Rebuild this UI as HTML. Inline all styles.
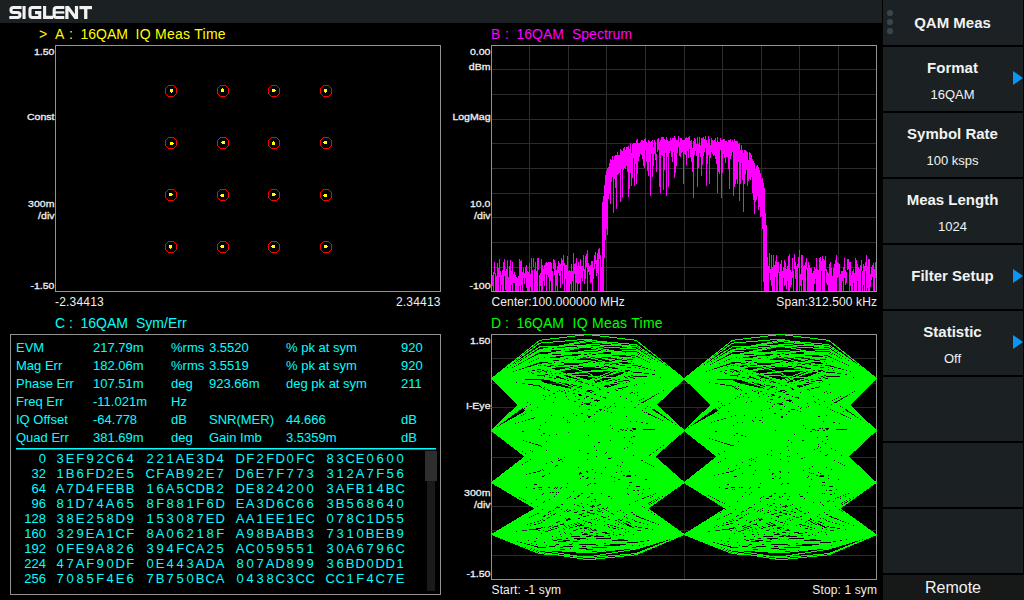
<!DOCTYPE html>
<html><head><meta charset="utf-8"><style>
html,body{margin:0;padding:0;background:#000;width:1024px;height:600px;overflow:hidden}
svg{display:block}
text{font-family:"Liberation Sans", sans-serif}
</style></head><body>
<svg width="1024" height="600" viewBox="0 0 1024 600">
<rect x="0" y="0" width="1024" height="600" fill="#000"/>
<rect x="0" y="0" width="882" height="23" fill="#1b2122"/>
<g fill="none" stroke="#f2f2f2" stroke-width="3.1"><path d="M21.6 7.55H13.4Q10.95 7.55 10.95 10.05Q10.95 12.5 13.4 12.5H17.4Q19.95 12.5 19.95 15Q19.95 17.45 17.4 17.45H9.3"/><path d="M41.3 7.55H32.4Q29.95 7.55 29.95 10V15Q29.95 17.45 32.4 17.45H39.75V12.6H35" stroke-linejoin="miter"/><path d="M44.6 6V17.4H53.2"/><path d="M64.3 7.55H56.6Q54.15 7.55 54.15 10V15Q54.15 17.45 56.6 17.45H64.3"/><path d="M55 12.45H64.3" stroke-width="2.3"/></g><g fill="#f2f2f2"><rect x="22.5" y="6" width="3.1" height="13"/><polygon points="65.3,19 65.3,6 68.9,6 74.9,14.2 74.9,6 78.1,6 78.1,19 74.5,19 68.5,10.8 68.5,19"/><rect x="79.4" y="6" width="12.6" height="3.2"/><rect x="84.1" y="6" width="3.3" height="13"/></g>
<rect x="883" y="0" width="140" height="45" fill="#1b2124"/>
<rect x="883" y="47" width="140" height="64" fill="#1b2122"/>
<rect x="883" y="113" width="140" height="64" fill="#1b2122"/>
<rect x="883" y="179" width="140" height="64" fill="#1b2122"/>
<rect x="883" y="245" width="140" height="64" fill="#1b2122"/>
<rect x="883" y="311" width="140" height="64" fill="#1b2122"/>
<rect x="883" y="377" width="140" height="64" fill="#1b2122"/>
<rect x="883" y="443" width="140" height="64" fill="#1b2122"/>
<rect x="883" y="509" width="140" height="64" fill="#1b2122"/>
<rect x="883" y="575" width="141" height="25" fill="#171818"/>
<circle cx="890" cy="13" r="3.1" fill="#3a454b"/>
<circle cx="890" cy="22" r="3.1" fill="#3a454b"/>
<circle cx="890" cy="31" r="3.1" fill="#3a454b"/>
<text x="952.5" y="27.8" font-size="15" fill="#f2f2f2" text-anchor="middle" font-weight="bold" >QAM Meas</text>
<text x="952.5" y="73" font-size="15" fill="#f2f2f2" text-anchor="middle" font-weight="bold" >Format</text>
<text x="952.5" y="99" font-size="13" fill="#f2f2f2" text-anchor="middle" font-weight="normal" >16QAM</text>
<polygon points="1013,71 1023,78 1013,85" fill="#0a96f5"/>
<text x="952.5" y="139" font-size="15" fill="#f2f2f2" text-anchor="middle" font-weight="bold" >Symbol Rate</text>
<text x="952.5" y="165" font-size="13" fill="#f2f2f2" text-anchor="middle" font-weight="normal" >100 ksps</text>
<text x="952.5" y="205" font-size="15" fill="#f2f2f2" text-anchor="middle" font-weight="bold" >Meas Length</text>
<text x="952.5" y="231" font-size="13" fill="#f2f2f2" text-anchor="middle" font-weight="normal" >1024</text>
<text x="952.5" y="281.3" font-size="15" fill="#f2f2f2" text-anchor="middle" font-weight="bold" >Filter Setup</text>
<polygon points="1013,269 1023,276 1013,283" fill="#0a96f5"/>
<text x="952.5" y="337" font-size="15" fill="#f2f2f2" text-anchor="middle" font-weight="bold" >Statistic</text>
<text x="952.5" y="363" font-size="13" fill="#f2f2f2" text-anchor="middle" font-weight="normal" >Off</text>
<polygon points="1013,335 1023,342 1013,349" fill="#0a96f5"/>
<text x="953" y="593" font-size="16" fill="#f2f2f2" text-anchor="middle" font-weight="normal" >Remote</text>
<rect x="55" y="45" width="386" height="1" fill="#939393"/>
<rect x="55" y="291" width="386" height="1" fill="#939393"/>
<rect x="55" y="45" width="1" height="247" fill="#939393"/>
<rect x="440" y="45" width="1" height="247" fill="#939393"/>
<rect x="529" y="45" width="1" height="246" fill="#2c2c2c"/>
<rect x="568" y="45" width="1" height="246" fill="#2c2c2c"/>
<rect x="606" y="45" width="1" height="246" fill="#2c2c2c"/>
<rect x="645" y="45" width="1" height="246" fill="#2c2c2c"/>
<rect x="684" y="45" width="1" height="246" fill="#2c2c2c"/>
<rect x="722" y="45" width="1" height="246" fill="#2c2c2c"/>
<rect x="761" y="45" width="1" height="246" fill="#2c2c2c"/>
<rect x="799" y="45" width="1" height="246" fill="#2c2c2c"/>
<rect x="838" y="45" width="1" height="246" fill="#2c2c2c"/>
<rect x="491" y="69" width="385" height="1" fill="#2c2c2c"/>
<rect x="491" y="94" width="385" height="1" fill="#2c2c2c"/>
<rect x="491" y="119" width="385" height="1" fill="#2c2c2c"/>
<rect x="491" y="143" width="385" height="1" fill="#2c2c2c"/>
<rect x="491" y="168" width="385" height="1" fill="#2c2c2c"/>
<rect x="491" y="193" width="385" height="1" fill="#2c2c2c"/>
<rect x="491" y="217" width="385" height="1" fill="#2c2c2c"/>
<rect x="491" y="242" width="385" height="1" fill="#2c2c2c"/>
<rect x="491" y="267" width="385" height="1" fill="#2c2c2c"/>
<rect x="491" y="45" width="386" height="1" fill="#939393"/>
<rect x="491" y="291" width="386" height="1" fill="#939393"/>
<rect x="491" y="45" width="1" height="247" fill="#939393"/>
<rect x="876" y="45" width="1" height="247" fill="#939393"/>
<rect x="684" y="334" width="1" height="245" fill="#2c2c2c"/>
<rect x="491" y="358" width="385" height="1" fill="#2c2c2c"/>
<rect x="491" y="383" width="385" height="1" fill="#2c2c2c"/>
<rect x="491" y="407" width="385" height="1" fill="#2c2c2c"/>
<rect x="491" y="432" width="385" height="1" fill="#2c2c2c"/>
<rect x="491" y="457" width="385" height="1" fill="#2c2c2c"/>
<rect x="491" y="481" width="385" height="1" fill="#2c2c2c"/>
<rect x="491" y="506" width="385" height="1" fill="#2c2c2c"/>
<rect x="491" y="530" width="385" height="1" fill="#2c2c2c"/>
<rect x="491" y="555" width="385" height="1" fill="#2c2c2c"/>
<rect x="491" y="334" width="386" height="1" fill="#939393"/>
<rect x="491" y="579" width="386" height="1" fill="#939393"/>
<rect x="491" y="334" width="1" height="246" fill="#939393"/>
<rect x="876" y="334" width="1" height="246" fill="#939393"/>
<rect x="10" y="334" width="431" height="1" fill="#939393"/>
<rect x="10" y="594" width="431" height="1" fill="#939393"/>
<rect x="10" y="334" width="1" height="261" fill="#939393"/>
<rect x="440" y="334" width="1" height="261" fill="#939393"/>
<path d="M492 275h1V286h-1zM493 272h1V291h-1zM494 262h1V274h-1zM495 273h1V291h-1zM496 276h1V291h-1zM497 263h1V291h-1zM498 268h1V291h-1zM499 259h1V277h-1zM500 271h1V291h-1zM501 275h1V285h-1zM502 270h1V291h-1zM503 262h1V291h-1zM504 259h1V276h-1zM505 271h1V290h-1zM506 269h1V291h-1zM507 260h1V291h-1zM508 277h1V291h-1zM509 266h1V291h-1zM510 260h1V291h-1zM511 271h1V285h-1zM512 262h1V291h-1zM513 274h1V283h-1zM514 272h1V283h-1zM515 275h1V291h-1zM516 277h1V291h-1zM517 278h1V291h-1zM518 276h1V291h-1zM519 259h1V286h-1zM520 261h1V291h-1zM521 260h1V285h-1zM522 272h1V291h-1zM523 268h1V278h-1zM524 273h1V284h-1zM525 267h1V278h-1zM526 265h1V288h-1zM527 271h1V291h-1zM528 272h1V291h-1zM529 263h1V291h-1zM530 274h1V287h-1zM531 258h1V291h-1zM532 270h1V291h-1zM533 258h1V267h-1zM534 269h1V291h-1zM535 262h1V291h-1zM536 271h1V291h-1zM537 258h1V291h-1zM538 258h1V270h-1zM539 275h1V291h-1zM540 273h1V286h-1zM541 259h1V291h-1zM542 265h1V291h-1zM543 269h1V281h-1zM544 265h1V286h-1zM545 263h1V274h-1zM546 262h1V291h-1zM547 263h1V275h-1zM548 262h1V277h-1zM549 262h1V291h-1zM550 262h1V281h-1zM551 263h1V291h-1zM552 271h1V291h-1zM553 259h1V269h-1zM554 260h1V275h-1zM555 263h1V291h-1zM556 270h1V286h-1zM557 266h1V291h-1zM558 261h1V273h-1zM559 263h1V276h-1zM560 264h1V288h-1zM561 258h1V271h-1zM562 260h1V284h-1zM563 255h1V266h-1zM564 263h1V291h-1zM565 265h1V279h-1zM566 265h1V291h-1zM567 256h1V291h-1zM568 271h1V291h-1zM569 270h1V291h-1zM570 271h1V284h-1zM571 264h1V291h-1zM572 271h1V281h-1zM573 253h1V291h-1zM574 264h1V274h-1zM575 263h1V291h-1zM576 258h1V283h-1zM577 266h1V291h-1zM578 262h1V284h-1zM579 266h1V283h-1zM580 259h1V291h-1zM581 266h1V278h-1zM582 266h1V281h-1zM583 255h1V271h-1zM584 269h1V284h-1zM585 256h1V279h-1zM586 254h1V267h-1zM587 250h1V291h-1zM588 263h1V272h-1zM589 266h1V275h-1zM590 265h1V283h-1zM591 261h1V282h-1zM592 261h1V291h-1zM593 268h1V279h-1zM594 255h1V269h-1zM595 252h1V264h-1zM596 260h1V276h-1zM597 253h1V273h-1zM598 249h1V291h-1zM599 248h1V259h-1zM600 255h1V291h-1zM601 267h1V291h-1zM602 202h1V291h-1zM603 196h1V291h-1zM604 185h1V258h-1zM605 175h1V240h-1zM606 171h1V229h-1zM607 168h1V235h-1zM608 167h1V199h-1zM609 163h1V194h-1zM610 159h1V204h-1zM611 160h1V182h-1zM612 156h1V177h-1zM613 160h1V213h-1zM614 156h1V179h-1zM615 155h1V188h-1zM616 155h1V209h-1zM617 152h1V175h-1zM618 155h1V174h-1zM619 155h1V173h-1zM620 149h1V202h-1zM621 150h1V169h-1zM622 151h1V197h-1zM623 148h1V170h-1zM624 147h1V168h-1zM625 150h1V169h-1zM626 147h1V166h-1zM627 147h1V172h-1zM628 146h1V197h-1zM629 149h1V189h-1zM630 143h1V173h-1zM631 153h1V186h-1zM632 144h1V178h-1zM633 143h1V158h-1zM634 143h1V186h-1zM635 143h1V164h-1zM636 140h1V184h-1zM637 139h1V174h-1zM638 143h1V161h-1zM639 143h1V157h-1zM640 142h1V154h-1zM641 140h1V155h-1zM642 140h1V159h-1zM643 141h1V166h-1zM644 139h1V168h-1zM645 138h1V150h-1zM646 142h1V162h-1zM647 143h1V171h-1zM648 140h1V176h-1zM649 141h1V162h-1zM650 142h1V196h-1zM651 141h1V154h-1zM652 140h1V177h-1zM653 147h1V166h-1zM654 140h1V154h-1zM655 142h1V160h-1zM656 154h1V172h-1zM657 139h1V152h-1zM658 138h1V150h-1zM659 142h1V187h-1zM660 140h1V193h-1zM661 137h1V155h-1zM662 137h1V156h-1zM663 137h1V190h-1zM664 139h1V170h-1zM665 140h1V153h-1zM666 137h1V196h-1zM667 140h1V157h-1zM668 141h1V187h-1zM669 141h1V153h-1zM670 138h1V151h-1zM671 140h1V157h-1zM672 138h1V162h-1zM673 138h1V152h-1zM674 136h1V178h-1zM675 138h1V173h-1zM676 140h1V166h-1zM677 140h1V153h-1zM678 136h1V147h-1zM679 142h1V156h-1zM680 138h1V157h-1zM681 138h1V153h-1zM682 140h1V152h-1zM683 140h1V184h-1zM684 140h1V154h-1zM685 138h1V155h-1zM686 137h1V165h-1zM687 138h1V151h-1zM688 137h1V158h-1zM689 136h1V149h-1zM690 141h1V157h-1zM691 140h1V162h-1zM692 148h1V172h-1zM693 141h1V198h-1zM694 138h1V155h-1zM695 139h1V151h-1zM696 144h1V156h-1zM697 137h1V187h-1zM698 144h1V168h-1zM699 137h1V153h-1zM700 145h1V157h-1zM701 138h1V176h-1zM702 138h1V165h-1zM703 137h1V156h-1zM704 139h1V152h-1zM705 136h1V148h-1zM706 140h1V186h-1zM707 143h1V164h-1zM708 136h1V155h-1zM709 139h1V184h-1zM710 145h1V158h-1zM711 138h1V152h-1zM712 140h1V154h-1zM713 141h1V156h-1zM714 140h1V155h-1zM715 138h1V159h-1zM716 142h1V164h-1zM717 137h1V193h-1zM718 142h1V172h-1zM719 142h1V174h-1zM720 138h1V150h-1zM721 140h1V198h-1zM722 140h1V173h-1zM723 139h1V154h-1zM724 139h1V158h-1zM725 141h1V163h-1zM726 141h1V157h-1zM727 142h1V157h-1zM728 140h1V169h-1zM729 140h1V189h-1zM730 139h1V159h-1zM731 142h1V156h-1zM732 140h1V152h-1zM733 142h1V196h-1zM734 139h1V187h-1zM735 141h1V184h-1zM736 141h1V179h-1zM737 141h1V184h-1zM738 144h1V162h-1zM739 143h1V201h-1zM740 150h1V184h-1zM741 145h1V163h-1zM742 150h1V180h-1zM743 153h1V212h-1zM744 150h1V184h-1zM745 150h1V175h-1zM746 151h1V170h-1zM747 152h1V186h-1zM748 160h1V181h-1zM749 152h1V179h-1zM750 153h1V180h-1zM751 155h1V177h-1zM752 159h1V193h-1zM753 161h1V200h-1zM754 163h1V214h-1zM755 169h1V202h-1zM756 166h1V200h-1zM757 165h1V196h-1zM758 167h1V210h-1zM759 170h1V207h-1zM760 173h1V217h-1zM761 179h1V216h-1zM762 178h1V229h-1zM763 183h1V282h-1zM764 188h1V291h-1zM765 213h1V291h-1zM766 225h1V291h-1zM767 257h1V291h-1zM768 266h1V291h-1zM769 253h1V273h-1zM770 269h1V280h-1zM771 255h1V286h-1zM772 267h1V291h-1zM773 255h1V291h-1zM774 265h1V291h-1zM775 261h1V277h-1zM776 255h1V291h-1zM777 262h1V291h-1zM778 262h1V273h-1zM779 272h1V291h-1zM780 264h1V291h-1zM781 260h1V291h-1zM782 271h1V291h-1zM783 267h1V278h-1zM784 260h1V286h-1zM785 262h1V285h-1zM786 269h1V289h-1zM787 266h1V281h-1zM788 256h1V291h-1zM789 254h1V291h-1zM790 270h1V287h-1zM791 272h1V285h-1zM792 258h1V278h-1zM793 271h1V291h-1zM794 254h1V269h-1zM795 262h1V279h-1zM796 266h1V291h-1zM797 264h1V291h-1zM798 257h1V268h-1zM799 250h1V291h-1zM800 274h1V286h-1zM801 255h1V291h-1zM802 255h1V280h-1zM803 266h1V291h-1zM804 265h1V291h-1zM805 262h1V291h-1zM806 258h1V269h-1zM807 268h1V291h-1zM808 262h1V291h-1zM809 265h1V291h-1zM810 268h1V291h-1zM811 268h1V291h-1zM812 273h1V291h-1zM813 271h1V291h-1zM814 267h1V284h-1zM815 269h1V279h-1zM816 258h1V291h-1zM817 269h1V291h-1zM818 270h1V291h-1zM819 258h1V291h-1zM820 257h1V291h-1zM821 261h1V271h-1zM822 256h1V291h-1zM823 259h1V291h-1zM824 260h1V291h-1zM825 256h1V271h-1zM826 269h1V283h-1zM827 272h1V285h-1zM828 273h1V291h-1zM829 264h1V291h-1zM830 262h1V291h-1zM831 268h1V291h-1zM832 276h1V291h-1zM833 268h1V291h-1zM834 264h1V291h-1zM835 260h1V291h-1zM836 255h1V291h-1zM837 262h1V278h-1zM838 263h1V277h-1zM839 264h1V291h-1zM840 274h1V291h-1zM841 271h1V291h-1zM842 271h1V281h-1zM843 267h1V291h-1zM844 258h1V278h-1zM845 270h1V285h-1zM846 272h1V283h-1zM847 259h1V270h-1zM848 259h1V269h-1zM849 262h1V291h-1zM850 262h1V286h-1zM851 275h1V291h-1zM852 271h1V291h-1zM853 269h1V283h-1zM854 273h1V291h-1zM855 258h1V291h-1zM856 260h1V291h-1zM857 264h1V281h-1zM858 267h1V291h-1zM859 269h1V291h-1zM860 265h1V291h-1zM861 260h1V271h-1zM862 271h1V291h-1zM863 264h1V285h-1zM864 266h1V291h-1zM865 262h1V271h-1zM866 255h1V291h-1zM867 266h1V288h-1zM868 259h1V291h-1zM869 259h1V291h-1zM870 274h1V287h-1zM871 267h1V280h-1zM872 265h1V277h-1zM873 263h1V291h-1zM874 269h1V291h-1zM875 262h1V278h-1z" fill="#ff00ff" shape-rendering="crispEdges"/>
<svg x="491" y="334" width="386" height="246" overflow="hidden"><g transform="translate(-491,-334)" shape-rendering="crispEdges"><path d="M491.5 378.7L539.7 350.8L587.9 347.3L636.0 357.0L684.2 378.7L732.4 393.8L780.5 408.0L828.7 420.4L876.9 430.6M491.5 378.7L539.7 393.8L587.9 408.0L636.0 420.4L684.2 430.6L732.4 438.8L780.5 443.7L828.7 442.2L876.9 430.6M491.5 430.6L539.7 438.8L587.9 443.7L636.0 442.2L684.2 430.6L732.4 408.9L780.5 384.0L828.7 363.2L876.9 378.7M491.5 430.6L539.7 408.9L587.9 384.0L636.0 363.2L684.2 378.7L732.4 415.2L780.5 467.9L828.7 514.7L876.9 534.5M491.5 378.7L539.7 415.2L587.9 467.9L636.0 514.7L684.2 534.5L732.4 519.0L780.5 476.2L828.7 423.7L876.9 378.7M491.5 534.5L539.7 519.0L587.9 476.2L636.0 423.7L684.2 378.7L732.4 340.3L780.5 334.5L828.7 340.3L876.9 378.7M491.5 378.7L539.7 340.3L587.9 334.5L636.0 340.3L684.2 378.7L732.4 423.3L780.5 475.0L828.7 517.5L876.9 534.5M491.5 378.7L539.7 423.3L587.9 475.0L636.0 517.5L684.2 534.5L732.4 518.4L780.5 475.5L828.7 422.9L876.9 378.7M491.5 534.5L539.7 518.4L587.9 475.5L636.0 422.9L684.2 378.7L732.4 343.1L780.5 339.1L828.7 348.9L876.9 378.7M491.5 378.7L539.7 343.1L587.9 339.1L636.0 348.9L684.2 378.7L732.4 403.3L780.5 430.7L828.7 458.4L876.9 482.6M491.5 378.7L539.7 403.3L587.9 430.7L636.0 458.4L684.2 482.6L732.4 499.2L780.5 505.1L828.7 499.1L876.9 482.6M491.5 482.6L539.7 499.2L587.9 505.1L636.0 499.1L684.2 482.6L732.4 458.5L780.5 430.8L828.7 403.2L876.9 378.7M491.5 482.6L539.7 458.5L587.9 430.8L636.0 403.2L684.2 378.7L732.4 349.7L780.5 340.3L828.7 344.6L876.9 378.7M491.5 378.7L539.7 349.7L587.9 340.3L636.0 344.6L684.2 378.7L732.4 420.3L780.5 470.8L828.7 514.2L876.9 534.5M491.5 378.7L539.7 420.3L587.9 470.8L636.0 514.2L684.2 534.5L732.4 525.0L780.5 492.9L828.7 455.5L876.9 430.6M491.5 534.5L539.7 525.0L587.9 492.9L636.0 455.5L684.2 430.6L732.4 426.7L780.5 440.6L828.7 462.4L876.9 482.6M491.5 430.6L539.7 426.7L587.9 440.6L636.0 462.4L684.2 482.6L732.4 496.0L780.5 501.3L828.7 497.2L876.9 482.6M491.5 482.6L539.7 496.0L587.9 501.3L636.0 497.2L684.2 482.6L732.4 457.4L780.5 426.1L828.7 397.0L876.9 378.7M491.5 482.6L539.7 457.4L587.9 426.1L636.0 397.0L684.2 378.7L732.4 373.5L780.5 386.7L828.7 406.7L876.9 430.6M491.5 378.7L539.7 373.5L587.9 386.7L636.0 406.7L684.2 430.6L732.4 454.5L780.5 474.7L828.7 485.9L876.9 482.6M491.5 430.6L539.7 454.5L587.9 474.7L636.0 485.9L684.2 482.6L732.4 462.3L780.5 429.9L828.7 397.4L876.9 378.7M491.5 482.6L539.7 462.3L587.9 429.9L636.0 397.4L684.2 378.7L732.4 381.2L780.5 400.7L828.7 422.5L876.9 430.6M491.5 378.7L539.7 381.2L587.9 400.7L636.0 422.5L684.2 430.6L732.4 418.2L780.5 393.0L828.7 370.2L876.9 378.7M491.5 430.6L539.7 418.2L587.9 393.0L636.0 370.2L684.2 378.7L732.4 413.6L780.5 466.6L828.7 514.3L876.9 534.5M491.5 378.7L539.7 413.6L587.9 466.6L636.0 514.3L684.2 534.5L732.4 518.2L780.5 473.8L828.7 420.9L876.9 378.7M491.5 534.5L539.7 518.2L587.9 473.8L636.0 420.9L684.2 378.7L732.4 346.9L780.5 345.2L828.7 357.3L876.9 378.7M491.5 378.7L539.7 346.9L587.9 345.2L636.0 357.3L684.2 378.7L732.4 390.9L780.5 402.5L828.7 415.3L876.9 430.6M491.5 378.7L539.7 390.9L587.9 402.5L636.0 415.3L684.2 430.6L732.4 447.6L780.5 463.8L828.7 476.2L876.9 482.6M491.5 430.6L539.7 447.6L587.9 463.8L636.0 476.2L684.2 482.6L732.4 482.8L780.5 479.6L828.7 478.0L876.9 482.6M491.5 482.6L539.7 482.8L587.9 479.6L636.0 478.0L684.2 482.6L732.4 494.5L780.5 510.8L828.7 525.9L876.9 534.5M491.5 482.6L539.7 494.5L587.9 510.8L636.0 525.9L684.2 534.5L732.4 534.5L780.5 525.8L828.7 508.6L876.9 482.6M491.5 534.5L539.7 534.5L587.9 525.8L636.0 508.6L684.2 482.6L732.4 448.7L780.5 412.6L828.7 385.4L876.9 378.7M491.5 482.6L539.7 448.7L587.9 412.6L636.0 385.4L684.2 378.7L732.4 397.3L780.5 433.2L828.7 468.1L876.9 482.6M491.5 378.7L539.7 397.3L587.9 433.2L636.0 468.1L684.2 482.6L732.4 467.9L780.5 432.0L828.7 395.4L876.9 378.7M491.5 482.6L539.7 467.9L587.9 432.0L636.0 395.4L684.2 378.7L732.4 390.8L780.5 424.5L828.7 461.1L876.9 482.6M491.5 378.7L539.7 390.8L587.9 424.5L636.0 461.1L684.2 482.6L732.4 481.2L780.5 462.7L828.7 441.2L876.9 430.6M491.5 482.6L539.7 481.2L587.9 462.7L636.0 441.2L684.2 430.6L732.4 437.0L780.5 455.6L828.7 474.7L876.9 482.6M491.5 430.6L539.7 437.0L587.9 455.6L636.0 474.7L684.2 482.6L732.4 474.4L780.5 455.1L828.7 436.6L876.9 430.6M491.5 482.6L539.7 474.4L587.9 455.1L636.0 436.6L684.2 430.6L732.4 441.5L780.5 462.8L828.7 480.7L876.9 482.6M491.5 430.6L539.7 441.5L587.9 462.8L636.0 480.7L684.2 482.6L732.4 464.4L780.5 432.9L828.7 400.6L876.9 378.7M491.5 482.6L539.7 464.4L587.9 432.9L636.0 400.6L684.2 378.7L732.4 367.5L780.5 380.2L828.7 400.4L876.9 430.6M491.5 378.7L539.7 367.5L587.9 380.2L636.0 400.4L684.2 430.6L732.4 468.3L780.5 506.3L828.7 532.5L876.9 534.5M491.5 430.6L539.7 468.3L587.9 506.3L636.0 532.5L684.2 534.5L732.4 507.8L780.5 460.6L828.7 411.4L876.9 378.7M491.5 534.5L539.7 507.8L587.9 460.6L636.0 411.4L684.2 378.7L732.4 366.5L780.5 385.9L828.7 409.6L876.9 430.6M491.5 378.7L539.7 366.5L587.9 385.9L636.0 409.6L684.2 430.6L732.4 443.1L780.5 446.4L828.7 442.0L876.9 430.6M491.5 430.6L539.7 443.1L587.9 446.4L636.0 442.0L684.2 430.6L732.4 413.5L780.5 394.4L828.7 380.5L876.9 378.7M491.5 430.6L539.7 413.5L587.9 394.4L636.0 380.5L684.2 378.7L732.4 392.1L780.5 417.9L828.7 450.1L876.9 482.6M491.5 378.7L539.7 392.1L587.9 417.9L636.0 450.1L684.2 482.6L732.4 511.3L780.5 532.7L828.7 540.5L876.9 534.5M491.5 482.6L539.7 511.3L587.9 532.7L636.0 540.5L684.2 534.5L732.4 509.9L780.5 475.3L828.7 444.3L876.9 430.6M491.5 534.5L539.7 509.9L587.9 475.3L636.0 444.3L684.2 430.6L732.4 440.3L780.5 468.8L828.7 504.2L876.9 534.5M491.5 430.6L539.7 440.3L587.9 468.8L636.0 504.2L684.2 534.5L732.4 549.1L780.5 553.0L828.7 547.7L876.9 534.5M491.5 534.5L539.7 549.1L587.9 553.0L636.0 547.7L684.2 534.5L732.4 509.9L780.5 480.6L828.7 452.1L876.9 430.6M491.5 534.5L539.7 509.9L587.9 480.6L636.0 452.1L684.2 430.6L732.4 419.6L780.5 418.5L828.7 423.6L876.9 430.6M491.5 430.6L539.7 419.6L587.9 418.5L636.0 423.6L684.2 430.6L732.4 436.7L780.5 439.7L828.7 438.2L876.9 430.6M491.5 430.6L539.7 436.7L587.9 439.7L636.0 438.2L684.2 430.6L732.4 417.4L780.5 401.4L828.7 387.1L876.9 378.7M491.5 430.6L539.7 417.4L587.9 401.4L636.0 387.1L684.2 378.7L732.4 378.2L780.5 386.7L828.7 404.0L876.9 430.6M491.5 378.7L539.7 378.2L587.9 386.7L636.0 404.0L684.2 430.6L732.4 465.1L780.5 501.1L828.7 528.0L876.9 534.5M491.5 430.6L539.7 465.1L587.9 501.1L636.0 528.0L684.2 534.5L732.4 516.8L780.5 482.2L828.7 447.7L876.9 430.6M491.5 534.5L539.7 516.8L587.9 482.2L636.0 447.7L684.2 430.6L732.4 439.6L780.5 469.7L828.7 506.5L876.9 534.5M491.5 430.6L539.7 439.6L587.9 469.7L636.0 506.5L684.2 534.5L732.4 543.9L780.5 542.3L828.7 537.0L876.9 534.5M491.5 534.5L539.7 543.9L587.9 542.3L636.0 537.0L684.2 534.5L732.4 536.8L780.5 540.9L828.7 541.5L876.9 534.5M491.5 534.5L539.7 536.8L587.9 540.9L636.0 541.5L684.2 534.5L732.4 515.6L780.5 489.3L828.7 459.8L876.9 430.6M491.5 534.5L539.7 515.6L587.9 489.3L636.0 459.8L684.2 430.6L732.4 404.8L780.5 385.2L828.7 373.1L876.9 378.7M491.5 430.6L539.7 404.8L587.9 385.2L636.0 373.1L684.2 378.7L732.4 395.5L780.5 422.7L828.7 454.0L876.9 482.6M491.5 378.7L539.7 395.5L587.9 422.7L636.0 454.0L684.2 482.6L732.4 504.5L780.5 519.4L828.7 528.9L876.9 534.5M491.5 482.6L539.7 504.5L587.9 519.4L636.0 528.9L684.2 534.5L732.4 536.1L780.5 535.0L828.7 533.1L876.9 534.5M491.5 534.5L539.7 536.1L587.9 535.0L636.0 533.1L684.2 534.5L732.4 540.4L780.5 548.0L828.7 549.1L876.9 534.5M491.5 534.5L539.7 540.4L587.9 548.0L636.0 549.1L684.2 534.5L732.4 493.1L780.5 438.9L828.7 393.7L876.9 378.7M491.5 534.5L539.7 493.1L587.9 438.9L636.0 393.7L684.2 378.7L732.4 401.8L780.5 451.8L828.7 504.1L876.9 534.5M491.5 378.7L539.7 401.8L587.9 451.8L636.0 504.1L684.2 534.5L732.4 531.9L780.5 502.4L828.7 463.0L876.9 430.6M491.5 534.5L539.7 531.9L587.9 502.4L636.0 463.0L684.2 430.6L732.4 414.0L780.5 412.2L828.7 419.6L876.9 430.6M491.5 430.6L539.7 414.0L587.9 412.2L636.0 419.6L684.2 430.6L732.4 443.0L780.5 456.4L828.7 470.3L876.9 482.6M491.5 430.6L539.7 443.0L587.9 456.4L636.0 470.3L684.2 482.6L732.4 490.7L780.5 492.9L828.7 489.7L876.9 482.6M491.5 482.6L539.7 490.7L587.9 492.9L636.0 489.7L684.2 482.6L732.4 473.4L780.5 462.4L828.7 448.6L876.9 430.6M491.5 482.6L539.7 473.4L587.9 462.4L636.0 448.6L684.2 430.6L732.4 409.2L780.5 388.4L828.7 373.6L876.9 378.7M491.5 430.6L539.7 409.2L587.9 388.4L636.0 373.6L684.2 378.7L732.4 399.9L780.5 433.3L828.7 465.8L876.9 482.6M491.5 378.7L539.7 399.9L587.9 433.3L636.0 465.8L684.2 482.6L732.4 476.9L780.5 455.0L828.7 433.6L876.9 430.6M491.5 482.6L539.7 476.9L587.9 455.0L636.0 433.6L684.2 430.6L732.4 453.0L780.5 491.8L828.7 525.8L876.9 534.5M491.5 430.6L539.7 453.0L587.9 491.8L636.0 525.8L684.2 534.5L732.4 510.2L780.5 462.2L828.7 411.6L876.9 378.7M491.5 534.5L539.7 510.2L587.9 462.2L636.0 411.6L684.2 378.7L732.4 368.1L780.5 387.9L828.7 411.5L876.9 430.6M491.5 378.7L539.7 368.1L587.9 387.9L636.0 411.5L684.2 430.6L732.4 439.5L780.5 439.7L828.7 435.5L876.9 430.6M491.5 430.6L539.7 439.5L587.9 439.7L636.0 435.5L684.2 430.6L732.4 426.3L780.5 423.5L828.7 424.2L876.9 430.6M491.5 430.6L539.7 426.3L587.9 423.5L636.0 424.2L684.2 430.6L732.4 443.6L780.5 460.2L828.7 475.0L876.9 482.6M491.5 430.6L539.7 443.6L587.9 460.2L636.0 475.0L684.2 482.6L732.4 480.2L780.5 468.6L828.7 450.9L876.9 430.6M491.5 482.6L539.7 480.2L587.9 468.6L636.0 450.9L684.2 430.6L732.4 410.9L780.5 394.2L828.7 382.9L876.9 378.7M491.5 430.6L539.7 410.9L587.9 394.2L636.0 382.9L684.2 378.7L732.4 382.3L780.5 393.0L828.7 409.7L876.9 430.6M491.5 378.7L539.7 382.3L587.9 393.0L636.0 409.7L684.2 430.6L732.4 453.3L780.5 473.4L828.7 484.9L876.9 482.6M491.5 430.6L539.7 453.3L587.9 473.4L636.0 484.9L684.2 482.6L732.4 464.6L780.5 435.2L828.7 403.3L876.9 378.7M491.5 482.6L539.7 464.6L587.9 435.2L636.0 403.3L684.2 378.7L732.4 359.6L780.5 360.4L828.7 370.6L876.9 378.7M491.5 378.7L539.7 359.6L587.9 360.4L636.0 370.6L684.2 378.7L732.4 377.8L780.5 371.2L828.7 368.6L876.9 378.7M491.5 378.7L539.7 377.8L587.9 371.2L636.0 368.6L684.2 378.7L732.4 392.9L780.5 410.9L828.7 425.4L876.9 430.6M491.5 378.7L539.7 392.9L587.9 410.9L636.0 425.4L684.2 430.6L732.4 424.8L780.5 411.1L828.7 394.3L876.9 378.7M491.5 430.6L539.7 424.8L587.9 411.1L636.0 394.3L684.2 378.7L732.4 358.9L780.5 350.3L828.7 353.8L876.9 378.7M491.5 378.7L539.7 358.9L587.9 350.3L636.0 353.8L684.2 378.7L732.4 407.7L780.5 443.7L828.7 473.4L876.9 482.6M491.5 378.7L539.7 407.7L587.9 443.7L636.0 473.4L684.2 482.6L732.4 465.2L780.5 429.2L828.7 393.6L876.9 378.7M491.5 482.6L539.7 465.2L587.9 429.2L636.0 393.6L684.2 378.7L732.4 393.4L780.5 429.4L828.7 466.1L876.9 482.6M491.5 378.7L539.7 393.4L587.9 429.4L636.0 466.1L684.2 482.6L732.4 470.4L780.5 437.2L828.7 401.0L876.9 378.7M491.5 482.6L539.7 470.4L587.9 437.2L636.0 401.0L684.2 378.7L732.4 376.6L780.5 392.8L828.7 413.9L876.9 430.6M491.5 378.7L539.7 376.6L587.9 392.8L636.0 413.9L684.2 430.6L732.4 438.6L780.5 438.9L828.7 435.1L876.9 430.6M491.5 430.6L539.7 438.6L587.9 438.9L636.0 435.1L684.2 430.6L732.4 427.2L780.5 425.6L828.7 426.6L876.9 430.6M491.5 430.6L539.7 427.2L587.9 425.6L636.0 426.6L684.2 430.6L732.4 438.1L780.5 449.0L828.7 463.8L876.9 482.6M491.5 430.6L539.7 438.1L587.9 449.0L636.0 463.8L684.2 482.6L732.4 504.0L780.5 524.1L828.7 536.0L876.9 534.5M491.5 482.6L539.7 504.0L587.9 524.1L636.0 536.0L684.2 534.5L732.4 516.6L780.5 486.8L828.7 454.9L876.9 430.6M491.5 534.5L539.7 516.6L587.9 486.8L636.0 454.9L684.2 430.6L732.4 419.5L780.5 420.0L828.7 426.0L876.9 430.6M491.5 430.6L539.7 419.5L587.9 420.0L636.0 426.0L684.2 430.6L732.4 430.8L780.5 428.0L828.7 426.5L876.9 430.6M491.5 430.6L539.7 430.8L587.9 428.0L636.0 426.5L684.2 430.6L732.4 441.8L780.5 457.6L828.7 473.0L876.9 482.6M491.5 430.6L539.7 441.8L587.9 457.6L636.0 473.0L684.2 482.6L732.4 484.1L780.5 480.1L828.7 477.3L876.9 482.6M491.5 482.6L539.7 484.1L587.9 480.1L636.0 477.3L684.2 482.6L732.4 498.2L780.5 519.0L828.7 534.5L876.9 534.5M491.5 482.6L539.7 498.2L587.9 519.0L636.0 534.5L684.2 534.5L732.4 515.5L780.5 483.6L828.7 451.2L876.9 430.6M491.5 534.5L539.7 515.5L587.9 483.6L636.0 451.2L684.2 430.6L732.4 427.5L780.5 439.7L828.7 460.2L876.9 482.6M491.5 430.6L539.7 427.5L587.9 439.7L636.0 460.2L684.2 482.6L732.4 503.4L780.5 520.9L828.7 532.6L876.9 534.5M491.5 482.6L539.7 503.4L587.9 520.9L636.0 532.6L684.2 534.5L732.4 524.3L780.5 505.2L828.7 487.4L876.9 482.6M491.5 534.5L539.7 524.3L587.9 505.2L636.0 487.4L684.2 482.6L732.4 496.1L780.5 520.9L828.7 538.6L876.9 534.5M491.5 482.6L539.7 496.1L587.9 520.9L636.0 538.6L684.2 534.5L732.4 499.8L780.5 447.0L828.7 399.2L876.9 378.7M491.5 534.5L539.7 499.8L587.9 447.0L636.0 399.2L684.2 378.7L732.4 394.3L780.5 438.0L828.7 491.0L876.9 534.5M491.5 378.7L539.7 394.3L587.9 438.0L636.0 491.0L684.2 534.5L732.4 553.7L780.5 557.0L828.7 549.0L876.9 534.5M491.5 534.5L539.7 553.7L587.9 557.0L636.0 549.0L684.2 534.5L732.4 511.9L780.5 486.5L828.7 459.0L876.9 430.6M491.5 534.5L539.7 511.9L587.9 486.5L636.0 459.0L684.2 430.6L732.4 403.5L780.5 381.8L828.7 366.6L876.9 378.7M491.5 430.6L539.7 403.5L587.9 381.8L636.0 366.6L684.2 378.7L732.4 404.3L780.5 441.0L828.7 472.7L876.9 482.6M491.5 378.7L539.7 404.3L587.9 441.0L636.0 472.7L684.2 482.6L732.4 463.3L780.5 424.4L828.7 388.5L876.9 378.7M491.5 482.6L539.7 463.3L587.9 424.4L636.0 388.5L684.2 378.7L732.4 404.3L780.5 454.7L828.7 505.8L876.9 534.5M491.5 378.7L539.7 404.3L587.9 454.7L636.0 505.8L684.2 534.5L732.4 531.1L780.5 502.1L828.7 463.6L876.9 430.6M491.5 534.5L539.7 531.1L587.9 502.1L636.0 463.6L684.2 430.6L732.4 411.3L780.5 406.5L828.7 414.0L876.9 430.6M491.5 430.6L539.7 411.3L587.9 406.5L636.0 414.0L684.2 430.6L732.4 454.0L780.5 481.2L828.7 509.2L876.9 534.5M491.5 430.6L539.7 454.0L587.9 481.2L636.0 509.2L684.2 534.5L732.4 550.1L780.5 557.8L828.7 553.6L876.9 534.5M491.5 534.5L539.7 550.1L587.9 557.8L636.0 553.6L684.2 534.5L732.4 493.4L780.5 444.2L828.7 401.5L876.9 378.7M491.5 534.5L539.7 493.4L587.9 444.2L636.0 401.5L684.2 378.7L732.4 381.7L780.5 406.7L828.7 443.7L876.9 482.6M491.5 378.7L539.7 381.7L587.9 406.7L636.0 443.7L684.2 482.6L732.4 516.4L780.5 539.0L828.7 545.3L876.9 534.5M491.5 482.6L539.7 516.4L587.9 539.0L636.0 545.3L684.2 534.5L732.4 498.8L780.5 449.4L828.7 403.5L876.9 378.7M491.5 534.5L539.7 498.8L587.9 449.4L636.0 403.5L684.2 378.7L732.4 383.5L780.5 412.6L828.7 450.7L876.9 482.6M491.5 378.7L539.7 383.5L587.9 412.6L636.0 450.7L684.2 482.6L732.4 500.1L780.5 503.4L828.7 496.5L876.9 482.6M491.5 482.6L539.7 500.1L587.9 503.4L636.0 496.5L684.2 482.6L732.4 463.6L780.5 443.6L828.7 429.9L876.9 430.6M491.5 482.6L539.7 463.6L587.9 443.6L636.0 429.9L684.2 430.6L732.4 449.4L780.5 480.9L828.7 513.4L876.9 534.5M491.5 430.6L539.7 449.4L587.9 480.9L636.0 513.4L684.2 534.5L732.4 537.4L780.5 526.2L828.7 505.5L876.9 482.6M491.5 534.5L539.7 537.4L587.9 526.2L636.0 505.5L684.2 482.6L732.4 461.4L780.5 443.9L828.7 432.5L876.9 430.6M491.5 482.6L539.7 461.4L587.9 443.9L636.0 432.5L684.2 430.6L732.4 439.9L780.5 457.4L828.7 474.9L876.9 482.6M491.5 430.6L539.7 439.9L587.9 457.4L636.0 474.9L684.2 482.6L732.4 475.2L780.5 456.3L828.7 437.3L876.9 430.6M491.5 482.6L539.7 475.2L587.9 456.3L636.0 437.3L684.2 430.6L732.4 441.7L780.5 464.1L828.7 482.7L876.9 482.6M491.5 430.6L539.7 441.7L587.9 464.1L636.0 482.7L684.2 482.6L732.4 458.8L780.5 420.9L828.7 388.1L876.9 378.7M491.5 482.6L539.7 458.8L587.9 420.9L636.0 388.1L684.2 378.7L732.4 399.9L780.5 444.3L828.7 494.9L876.9 534.5M491.5 378.7L539.7 399.9L587.9 444.3L636.0 494.9L684.2 534.5L732.4 550.4L780.5 551.7L828.7 544.4L876.9 534.5M491.5 534.5L539.7 550.4L587.9 551.7L636.0 544.4L684.2 534.5L732.4 522.4L780.5 510.4L828.7 497.0L876.9 482.6M491.5 534.5L539.7 522.4L587.9 510.4L636.0 497.0L684.2 482.6L732.4 468.7L780.5 456.5L828.7 444.7L876.9 430.6M491.5 482.6L539.7 468.7L587.9 456.5L636.0 444.7L684.2 430.6L732.4 413.1L780.5 394.5L828.7 381.0L876.9 378.7M491.5 430.6L539.7 413.1L587.9 394.5L636.0 381.0L684.2 378.7L732.4 389.2L780.5 407.6L828.7 424.3L876.9 430.6M491.5 378.7L539.7 389.2L587.9 407.6L636.0 424.3L684.2 430.6L732.4 423.6L780.5 407.4L828.7 390.0L876.9 378.7M491.5 430.6L539.7 423.6L587.9 407.4L636.0 390.0L684.2 378.7L732.4 376.1L780.5 385.9L828.7 403.9L876.9 430.6M491.5 378.7L539.7 376.1L587.9 385.9L636.0 403.9L684.2 430.6L732.4 464.1L780.5 498.9L828.7 525.5L876.9 534.5M491.5 430.6L539.7 464.1L587.9 498.9L636.0 525.5L684.2 534.5L732.4 521.9L780.5 492.4L828.7 457.7L876.9 430.6M491.5 534.5L539.7 521.9L587.9 492.4L636.0 457.7L684.2 430.6L732.4 418.2L780.5 418.9L828.7 425.6L876.9 430.6M491.5 430.6L539.7 418.2L587.9 418.9L636.0 425.6L684.2 430.6L732.4 430.6L780.5 427.4L828.7 426.0L876.9 430.6M491.5 430.6L539.7 430.6L587.9 427.4L636.0 426.0L684.2 430.6L732.4 442.0L780.5 457.3L828.7 472.2L876.9 482.6M491.5 430.6L539.7 442.0L587.9 457.3L636.0 472.2L684.2 482.6L732.4 487.0L780.5 486.9L828.7 484.7L876.9 482.6M491.5 482.6L539.7 487.0L587.9 486.9L636.0 484.7L684.2 482.6L732.4 481.2L780.5 480.2L828.7 480.1L876.9 482.6M491.5 482.6L539.7 481.2L587.9 480.2L636.0 480.1L684.2 482.6L732.4 488.6L780.5 495.5L828.7 496.2L876.9 482.6M491.5 482.6L539.7 488.6L587.9 495.5L636.0 496.2L684.2 482.6L732.4 451.9L780.5 412.4L828.7 381.9L876.9 378.7M491.5 482.6L539.7 451.9L587.9 412.4L636.0 381.9L684.2 378.7L732.4 409.7L780.5 463.3L828.7 513.8L876.9 534.5M491.5 378.7L539.7 409.7L587.9 463.3L636.0 513.8L684.2 534.5L732.4 514.2L780.5 463.4L828.7 409.1L876.9 378.7M491.5 534.5L539.7 514.2L587.9 463.4L636.0 409.1L684.2 378.7L732.4 384.9L780.5 419.5L828.7 459.6L876.9 482.6M491.5 378.7L539.7 384.9L587.9 419.5L636.0 459.6L684.2 482.6L732.4 479.0L780.5 456.7L828.7 434.8L876.9 430.6M491.5 482.6L539.7 479.0L587.9 456.7L636.0 434.8L684.2 430.6L732.4 450.2L780.5 485.1L828.7 518.5L876.9 534.5M491.5 430.6L539.7 450.2L587.9 485.1L636.0 518.5L684.2 534.5L732.4 526.6L780.5 498.9L828.7 463.1L876.9 430.6M491.5 534.5L539.7 526.6L587.9 498.9L636.0 463.1L684.2 430.6L732.4 408.0L780.5 394.8L828.7 386.6L876.9 378.7M491.5 430.6L539.7 408.0L587.9 394.8L636.0 386.6L684.2 378.7L732.4 364.5L780.5 355.8L828.7 358.2L876.9 378.7M491.5 378.7L539.7 364.5L587.9 355.8L636.0 358.2L684.2 378.7L732.4 401.3L780.5 430.0L828.7 458.9L876.9 482.6M491.5 378.7L539.7 401.3L587.9 430.0L636.0 458.9L684.2 482.6L732.4 497.8L780.5 503.2L828.7 498.1L876.9 482.6M491.5 482.6L539.7 497.8L587.9 503.2L636.0 498.1L684.2 482.6L732.4 458.2L780.5 428.7L828.7 400.0L876.9 378.7M491.5 482.6L539.7 458.2L587.9 428.7L636.0 400.0L684.2 378.7L732.4 361.6L780.5 362.0L828.7 371.0L876.9 378.7M491.5 378.7L539.7 361.6L587.9 362.0L636.0 371.0L684.2 378.7L732.4 378.2L780.5 371.9L828.7 369.0L876.9 378.7M491.5 378.7L539.7 378.2L587.9 371.9L636.0 369.0L684.2 378.7L732.4 393.0L780.5 411.6L828.7 426.4L876.9 430.6M491.5 378.7L539.7 393.0L587.9 411.6L636.0 426.4L684.2 430.6L732.4 422.4L780.5 406.1L828.7 389.3L876.9 378.7M491.5 430.6L539.7 422.4L587.9 406.1L636.0 389.3L684.2 378.7L732.4 377.2L780.5 387.0L828.7 405.1L876.9 430.6M491.5 378.7L539.7 377.2L587.9 387.0L636.0 405.1L684.2 430.6L732.4 461.7L780.5 494.0L828.7 520.6L876.9 534.5M491.5 430.6L539.7 461.7L587.9 494.0L636.0 520.6L684.2 534.5L732.4 532.6L780.5 517.6L828.7 497.8L876.9 482.6M491.5 534.5L539.7 532.6L587.9 517.6L636.0 497.8L684.2 482.6L732.4 477.3L780.5 480.4L828.7 484.8L876.9 482.6M491.5 482.6L539.7 477.3L587.9 480.4L636.0 484.8L684.2 482.6L732.4 470.0L780.5 450.7L828.7 434.3L876.9 430.6M491.5 482.6L539.7 470.0L587.9 450.7L636.0 434.3L684.2 430.6L732.4 443.2L780.5 465.6L828.7 483.4L876.9 482.6M491.5 430.6L539.7 443.2L587.9 465.6L636.0 483.4L684.2 482.6L732.4 458.3L780.5 420.0L828.7 387.1L876.9 378.7M491.5 482.6L539.7 458.3L587.9 420.0L636.0 387.1L684.2 378.7L732.4 401.9L780.5 448.3L828.7 498.7L876.9 534.5M491.5 378.7L539.7 401.9L587.9 448.3L636.0 498.7L684.2 534.5L732.4 543.9L780.5 535.7L828.7 512.0L876.9 482.6M491.5 534.5L539.7 543.9L587.9 535.7L636.0 512.0L684.2 482.6L732.4 452.3L780.5 423.1L828.7 397.3L876.9 378.7M491.5 482.6L539.7 452.3L587.9 423.1L636.0 397.3L684.2 378.7L732.4 364.3L780.5 365.7L828.7 374.0L876.9 378.7M491.5 378.7L539.7 364.3L587.9 365.7L636.0 374.0L684.2 378.7L732.4 374.4L780.5 366.1L828.7 364.4L876.9 378.7M491.5 378.7L539.7 374.4L587.9 366.1L636.0 364.4L684.2 378.7L732.4 397.7L780.5 424.1L828.7 453.5L876.9 482.6M491.5 378.7L539.7 397.7L587.9 424.1L636.0 453.5L684.2 482.6L732.4 509.4L780.5 530.8L828.7 539.8L876.9 534.5M491.5 482.6L539.7 509.4L587.9 530.8L636.0 539.8L684.2 534.5L732.4 509.6L780.5 474.1L828.7 442.8L876.9 430.6M491.5 534.5L539.7 509.6L587.9 474.1L636.0 442.8L684.2 430.6L732.4 444.0L780.5 476.2L828.7 511.8L876.9 534.5M491.5 430.6L539.7 444.0L587.9 476.2L636.0 511.8L684.2 534.5L732.4 536.3L780.5 521.7L828.7 500.0L876.9 482.6M491.5 534.5L539.7 536.3L587.9 521.7L636.0 500.0L684.2 482.6L732.4 474.9L780.5 476.0L828.7 480.4L876.9 482.6M491.5 482.6L539.7 474.9L587.9 476.0L636.0 480.4L684.2 482.6L732.4 480.0L780.5 475.1L828.7 473.9L876.9 482.6M491.5 482.6L539.7 480.0L587.9 475.1L636.0 473.9L684.2 482.6L732.4 502.4L780.5 526.7L828.7 540.3L876.9 534.5M491.5 482.6L539.7 502.4L587.9 526.7L636.0 540.3L684.2 534.5L732.4 500.9L780.5 450.7L828.7 403.6L876.9 378.7M491.5 534.5L539.7 500.9L587.9 450.7L636.0 403.6L684.2 378.7L732.4 383.9L780.5 412.7L828.7 450.2L876.9 482.6M491.5 378.7L539.7 383.9L587.9 412.7L636.0 450.2L684.2 482.6L732.4 502.7L780.5 509.4L828.7 502.9L876.9 482.6M491.5 482.6L539.7 502.7L587.9 509.4L636.0 502.9L684.2 482.6L732.4 449.5L780.5 411.2L828.7 382.5L876.9 378.7M491.5 482.6L539.7 449.5L587.9 411.2L636.0 382.5L684.2 378.7L732.4 405.8L780.5 454.8L828.7 504.7L876.9 534.5M491.5 378.7L539.7 405.8L587.9 454.8L636.0 504.7L684.2 534.5L732.4 533.7L780.5 506.8L828.7 467.6L876.9 430.6M491.5 534.5L539.7 533.7L587.9 506.8L636.0 467.6L684.2 430.6L732.4 403.7L780.5 387.6L828.7 379.9L876.9 378.7M491.5 430.6L539.7 403.7L587.9 387.6L636.0 379.9L684.2 378.7L732.4 383.9L780.5 395.5L828.7 412.2L876.9 430.6M491.5 378.7L539.7 383.9L587.9 395.5L636.0 412.2L684.2 430.6L732.4 447.9L780.5 462.3L828.7 473.8L876.9 482.6M491.5 430.6L539.7 447.9L587.9 462.3L636.0 473.8L684.2 482.6L732.4 488.5L780.5 490.8L828.7 488.8L876.9 482.6M491.5 482.6L539.7 488.5L587.9 490.8L636.0 488.8L684.2 482.6L732.4 472.8L780.5 460.3L828.7 446.1L876.9 430.6M491.5 482.6L539.7 472.8L587.9 460.3L636.0 446.1L684.2 430.6L732.4 415.0L780.5 400.3L828.7 388.0L876.9 378.7M491.5 430.6L539.7 415.0L587.9 400.3L636.0 388.0L684.2 378.7L732.4 368.4L780.5 364.2L828.7 366.9L876.9 378.7M491.5 378.7L539.7 368.4L587.9 364.2L636.0 366.9L684.2 378.7L732.4 391.2L780.5 407.3L828.7 422.2L876.9 430.6M491.5 378.7L539.7 391.2L587.9 407.3L636.0 422.2L684.2 430.6L732.4 430.0L780.5 423.6L828.7 420.6L876.9 430.6M491.5 430.6L539.7 430.0L587.9 423.6L636.0 420.6L684.2 430.6L732.4 457.3L780.5 493.7L828.7 524.6L876.9 534.5M491.5 430.6L539.7 457.3L587.9 493.7L636.0 524.6L684.2 534.5L732.4 517.4L780.5 481.6L828.7 446.3L876.9 430.6M491.5 534.5L539.7 517.4L587.9 481.6L636.0 446.3L684.2 430.6L732.4 442.7L780.5 475.5L828.7 511.8L876.9 534.5M491.5 430.6L539.7 442.7L587.9 475.5L636.0 511.8L684.2 534.5L732.4 535.5L780.5 519.8L828.7 498.3L876.9 482.6M491.5 534.5L539.7 535.5L587.9 519.8L636.0 498.3L684.2 482.6L732.4 477.6L780.5 480.6L828.7 484.5L876.9 482.6M491.5 482.6L539.7 477.6L587.9 480.6L636.0 484.5L684.2 482.6L732.4 472.4L780.5 456.4L828.7 440.6L876.9 430.6M491.5 482.6L539.7 472.4L587.9 456.4L636.0 440.6L684.2 430.6L732.4 429.0L780.5 433.0L828.7 435.8L876.9 430.6M491.5 430.6L539.7 429.0L587.9 433.0L636.0 435.8L684.2 430.6L732.4 415.2L780.5 394.4L828.7 378.8L876.9 378.7M491.5 430.6L539.7 415.2L587.9 394.4L636.0 378.8L684.2 378.7L732.4 397.9L780.5 430.4L828.7 463.1L876.9 482.6M491.5 378.7L539.7 397.9L587.9 430.4L636.0 463.1L684.2 482.6L732.4 482.6L780.5 466.8L828.7 445.8L876.9 430.6M491.5 482.6L539.7 482.6L587.9 466.8L636.0 445.8L684.2 430.6L732.4 426.2L780.5 429.9L828.7 433.7L876.9 430.6M491.5 430.6L539.7 426.2L587.9 429.9L636.0 433.7L684.2 430.6L732.4 418.5L780.5 401.2L828.7 385.8L876.9 378.7M491.5 430.6L539.7 418.5L587.9 401.2L636.0 385.8L684.2 378.7L732.4 382.3L780.5 394.8L828.7 412.2L876.9 430.6M491.5 378.7L539.7 382.3L587.9 394.8L636.0 412.2L684.2 430.6L732.4 447.8L780.5 462.6L828.7 474.5L876.9 482.6M491.5 430.6L539.7 447.8L587.9 462.6L636.0 474.5L684.2 482.6L732.4 486.3L780.5 486.0L828.7 483.9L876.9 482.6M491.5 482.6L539.7 486.3L587.9 486.0L636.0 483.9L684.2 482.6L732.4 483.9L780.5 487.0L828.7 488.0L876.9 482.6M491.5 482.6L539.7 483.9L587.9 487.0L636.0 488.0L684.2 482.6L732.4 468.8L780.5 450.1L828.7 434.4L876.9 430.6M491.5 482.6L539.7 468.8L587.9 450.1L636.0 434.4L684.2 430.6L732.4 442.3L780.5 463.8L828.7 481.8L876.9 482.6M491.5 430.6L539.7 442.3L587.9 463.8L636.0 481.8L684.2 482.6L732.4 460.7L780.5 424.2L828.7 390.9L876.9 378.7M491.5 482.6L539.7 460.7L587.9 424.2L636.0 390.9L684.2 378.7L732.4 394.6L780.5 429.8L828.7 465.3L876.9 482.6M491.5 378.7L539.7 394.6L587.9 429.8L636.0 465.3L684.2 482.6L732.4 473.6L780.5 444.1L828.7 407.9L876.9 378.7M491.5 482.6L539.7 473.6L587.9 444.1L636.0 407.9L684.2 378.7L732.4 354.4L780.5 352.1L828.7 361.8L876.9 378.7M491.5 378.7L539.7 354.4L587.9 352.1L636.0 361.8L684.2 378.7L732.4 389.1L780.5 399.8L828.7 412.9L876.9 430.6M491.5 378.7L539.7 389.1L587.9 399.8L636.0 412.9L684.2 430.6L732.4 453.0L780.5 475.3L828.7 488.3L876.9 482.6M491.5 430.6L539.7 453.0L587.9 475.3L636.0 488.3L684.2 482.6L732.4 455.4L780.5 416.0L828.7 383.9L876.9 378.7M491.5 482.6L539.7 455.4L587.9 416.0L636.0 383.9L684.2 378.7L732.4 408.2L780.5 461.2L828.7 512.1L876.9 534.5M491.5 378.7L539.7 408.2L587.9 461.2L636.0 512.1L684.2 534.5L732.4 517.0L780.5 468.8L828.7 414.4L876.9 378.7M491.5 534.5L539.7 517.0L587.9 468.8L636.0 414.4L684.2 378.7L732.4 370.1L780.5 393.2L828.7 418.4L876.9 430.6M491.5 378.7L539.7 370.1L587.9 393.2L636.0 418.4L684.2 430.6L732.4 421.9L780.5 399.4L828.7 379.8L876.9 378.7M491.5 430.6L539.7 421.9L587.9 399.4L636.0 379.8L684.2 378.7L732.4 400.8L780.5 437.1L828.7 469.7L876.9 482.6M491.5 378.7L539.7 400.8L587.9 437.1L636.0 469.7L684.2 482.6L732.4 470.0L780.5 438.8L828.7 403.7L876.9 378.7M491.5 482.6L539.7 470.0L587.9 438.8L636.0 403.7L684.2 378.7L732.4 365.8L780.5 380.6L828.7 402.2L876.9 430.6M491.5 378.7L539.7 365.8L587.9 380.6L636.0 402.2L684.2 430.6L732.4 461.9L780.5 492.4L828.7 518.1L876.9 534.5M491.5 430.6L539.7 461.9L587.9 492.4L636.0 518.1L684.2 534.5L732.4 537.5L780.5 529.0L828.7 509.1L876.9 482.6M491.5 534.5L539.7 537.5L587.9 529.0L636.0 509.1L684.2 482.6L732.4 453.3L780.5 424.3L828.7 398.5L876.9 378.7M491.5 482.6L539.7 453.3L587.9 424.3L636.0 398.5L684.2 378.7L732.4 359.6L780.5 355.9L828.7 363.2L876.9 378.7M491.5 378.7L539.7 359.6L587.9 355.9L636.0 363.2L684.2 378.7L732.4 389.4L780.5 400.9L828.7 414.2L876.9 430.6M491.5 378.7L539.7 389.4L587.9 400.9L636.0 414.2L684.2 430.6L732.4 449.7L780.5 467.7L828.7 479.9L876.9 482.6M491.5 430.6L539.7 449.7L587.9 467.7L636.0 479.9L684.2 482.6L732.4 475.5L780.5 461.8L828.7 445.7L876.9 430.6M491.5 482.6L539.7 475.5L587.9 461.8L636.0 445.7L684.2 430.6L732.4 418.6L780.5 412.1L828.7 414.7L876.9 430.6M491.5 430.6L539.7 418.6L587.9 412.1L636.0 414.7L684.2 430.6L732.4 460.1L780.5 496.2L828.7 525.6L876.9 534.5M491.5 430.6L539.7 460.1L587.9 496.2L636.0 525.6L684.2 534.5L732.4 517.6L780.5 482.4L828.7 447.1L876.9 430.6M491.5 534.5L539.7 517.6L587.9 482.4L636.0 447.1L684.2 430.6L732.4 441.9L780.5 474.7L828.7 511.5L876.9 534.5M491.5 430.6L539.7 441.9L587.9 474.7L636.0 511.5L684.2 534.5L732.4 535.0L780.5 518.0L828.7 496.3L876.9 482.6M491.5 534.5L539.7 535.0L587.9 518.0L636.0 496.3L684.2 482.6L732.4 481.1L780.5 486.9L828.7 490.1L876.9 482.6M491.5 482.6L539.7 481.1L587.9 486.9L636.0 490.1L684.2 482.6L732.4 462.6L780.5 434.4L828.7 404.5L876.9 378.7M491.5 482.6L539.7 462.6L587.9 434.4L636.0 404.5L684.2 378.7L732.4 350.1L780.5 341.6L828.7 346.5L876.9 378.7M491.5 378.7L539.7 350.1L587.9 341.6L636.0 346.5L684.2 378.7L732.4 416.0L780.5 462.4L828.7 505.9L876.9 534.5M491.5 378.7L539.7 416.0L587.9 462.4L636.0 505.9L684.2 534.5L732.4 540.1L780.5 528.8L828.7 505.7L876.9 482.6M491.5 534.5L539.7 540.1L587.9 528.8L636.0 505.7L684.2 482.6L732.4 465.9L780.5 455.2L828.7 445.2L876.9 430.6M491.5 482.6L539.7 465.9L587.9 455.2L636.0 445.2L684.2 430.6L732.4 410.5L780.5 389.7L828.7 375.2L876.9 378.7M491.5 430.6L539.7 410.5L587.9 389.7L636.0 375.2L684.2 378.7L732.4 397.6L780.5 428.1L828.7 459.8L876.9 482.6M491.5 378.7L539.7 397.6L587.9 428.1L636.0 459.8L684.2 482.6L732.4 491.4L780.5 489.0L828.7 483.2L876.9 482.6M491.5 482.6L539.7 491.4L587.9 489.0L636.0 483.2L684.2 482.6L732.4 491.1L780.5 506.6L828.7 523.0L876.9 534.5M491.5 482.6L539.7 491.1L587.9 506.6L636.0 523.0L684.2 534.5L732.4 538.2L780.5 537.8L828.7 536.1L876.9 534.5M491.5 534.5L539.7 538.2L587.9 537.8L636.0 536.1L684.2 534.5L732.4 532.8L780.5 531.2L828.7 530.9L876.9 534.5M491.5 534.5L539.7 532.8L587.9 531.2L636.0 530.9L684.2 534.5L732.4 541.1L780.5 548.2L828.7 548.5L876.9 534.5M491.5 534.5L539.7 541.1L587.9 548.2L636.0 548.5L684.2 534.5L732.4 496.1L780.5 445.0L828.7 399.5L876.9 378.7M491.5 534.5L539.7 496.1L587.9 445.0L636.0 399.5L684.2 378.7L732.4 391.0L780.5 427.8L828.7 466.3L876.9 482.6M491.5 378.7L539.7 391.0L587.9 427.8L636.0 466.3L684.2 482.6L732.4 465.7L780.5 425.6L828.7 388.0L876.9 378.7M491.5 482.6L539.7 465.7L587.9 425.6L636.0 388.0L684.2 378.7L732.4 407.7L780.5 462.2L828.7 513.7L876.9 534.5M491.5 378.7L539.7 407.7L587.9 462.2L636.0 513.7L684.2 534.5L732.4 513.8L780.5 463.3L828.7 409.6L876.9 378.7M491.5 534.5L539.7 513.8L587.9 463.3L636.0 409.6L684.2 378.7L732.4 382.0L780.5 412.6L828.7 452.1L876.9 482.6M491.5 378.7L539.7 382.0L587.9 412.6L636.0 452.1L684.2 482.6L732.4 495.8L780.5 494.8L828.7 488.1L876.9 482.6M491.5 482.6L539.7 495.8L587.9 494.8L636.0 488.1L684.2 482.6L732.4 480.3L780.5 479.8L828.7 480.2L876.9 482.6M491.5 482.6L539.7 480.3L587.9 479.8L636.0 480.2L684.2 482.6L732.4 488.2L780.5 495.0L828.7 495.9L876.9 482.6M491.5 482.6L539.7 488.2L587.9 495.0L636.0 495.9L684.2 482.6L732.4 452.3L780.5 413.4L828.7 383.1L876.9 378.7M491.5 482.6L539.7 452.3L587.9 413.4L636.0 383.1L684.2 378.7L732.4 406.9L780.5 457.5L828.7 507.7L876.9 534.5M491.5 378.7L539.7 406.9L587.9 457.5L636.0 507.7L684.2 534.5L732.4 527.4L780.5 494.0L828.7 454.8L876.9 430.6M491.5 534.5L539.7 527.4L587.9 494.0L636.0 454.8L684.2 430.6L732.4 430.8L780.5 449.6L828.7 471.7L876.9 482.6M491.5 430.6L539.7 430.8L587.9 449.6L636.0 471.7L684.2 482.6L732.4 476.5L780.5 458.5L828.7 439.8L876.9 430.6M491.5 482.6L539.7 476.5L587.9 458.5L636.0 439.8L684.2 430.6L732.4 435.5L780.5 451.2L828.7 469.8L876.9 482.6M491.5 430.6L539.7 435.5L587.9 451.2L636.0 469.8L684.2 482.6L732.4 485.3L780.5 480.4L828.7 476.6L876.9 482.6M491.5 482.6L539.7 485.3L587.9 480.4L636.0 476.6L684.2 482.6L732.4 501.3L780.5 525.8L828.7 540.1L876.9 534.5M491.5 482.6L539.7 501.3L587.9 525.8L636.0 540.1L684.2 534.5L732.4 501.2L780.5 451.6L828.7 404.8L876.9 378.7M491.5 534.5L539.7 501.2L587.9 451.6L636.0 404.8L684.2 378.7L732.4 380.6L780.5 406.1L828.7 443.7L876.9 482.6M491.5 378.7L539.7 380.6L587.9 406.1L636.0 443.7L684.2 482.6L732.4 515.8L780.5 537.9L828.7 544.2L876.9 534.5M491.5 482.6L539.7 515.8L587.9 537.9L636.0 544.2L684.2 534.5L732.4 501.6L780.5 454.9L828.7 408.8L876.9 378.7M491.5 534.5L539.7 501.6L587.9 454.9L636.0 408.8L684.2 378.7L732.4 368.1L780.5 387.1L828.7 410.6L876.9 430.6M491.5 378.7L539.7 368.1L587.9 387.1L636.0 410.6L684.2 430.6L732.4 440.3L780.5 440.2L828.7 435.4L876.9 430.6M491.5 430.6L539.7 440.3L587.9 440.2L636.0 435.4L684.2 430.6L732.4 427.8L780.5 426.7L828.7 427.3L876.9 430.6M491.5 430.6L539.7 427.8L587.9 426.7L636.0 427.3L684.2 430.6L732.4 438.1L780.5 450.4L828.7 466.1L876.9 482.6M491.5 430.6L539.7 438.1L587.9 450.4L636.0 466.1L684.2 482.6L732.4 497.5L780.5 510.4L828.7 522.3L876.9 534.5M491.5 482.6L539.7 497.5L587.9 510.4L636.0 522.3L684.2 534.5L732.4 544.0L780.5 550.2L828.7 548.5L876.9 534.5M491.5 534.5L539.7 544.0L587.9 550.2L636.0 548.5L684.2 534.5L732.4 500.8L780.5 456.2L828.7 411.7L876.9 378.7M491.5 534.5L539.7 500.8L587.9 456.2L636.0 411.7L684.2 378.7L732.4 354.9L780.5 357.1L828.7 370.7L876.9 378.7M491.5 378.7L539.7 354.9L587.9 357.1L636.0 370.7L684.2 378.7L732.4 370.6L780.5 355.6L828.7 352.3L876.9 378.7M491.5 378.7L539.7 370.6L587.9 355.6L636.0 352.3L684.2 378.7L732.4 417.9L780.5 469.6L828.7 514.6L876.9 534.5M491.5 378.7L539.7 417.9L587.9 469.6L636.0 514.6L684.2 534.5L732.4 522.5L780.5 487.7L828.7 450.3L876.9 430.6M491.5 534.5L539.7 522.5L587.9 487.7L636.0 450.3L684.2 430.6L732.4 438.3L780.5 468.5L828.7 505.9L876.9 534.5M491.5 430.6L539.7 438.3L587.9 468.5L636.0 505.9L684.2 534.5L732.4 543.9L780.5 541.8L828.7 536.1L876.9 534.5M491.5 534.5L539.7 543.9L587.9 541.8L636.0 536.1L684.2 534.5L732.4 539.4L780.5 546.3L828.7 547.0L876.9 534.5M491.5 534.5L539.7 539.4L587.9 546.3L636.0 547.0L684.2 534.5L732.4 501.1L780.5 456.7L828.7 412.5L876.9 378.7M491.5 534.5L539.7 501.1L587.9 456.7L636.0 412.5L684.2 378.7L732.4 350.2L780.5 346.1L828.7 355.2L876.9 378.7M491.5 378.7L539.7 350.2L587.9 346.1L636.0 355.2L684.2 378.7L732.4 396.7L780.5 414.5L828.7 427.2L876.9 430.6M491.5 378.7L539.7 396.7L587.9 414.5L636.0 427.2L684.2 430.6L732.4 423.1L780.5 407.4L828.7 390.2L876.9 378.7M491.5 430.6L539.7 423.1L587.9 407.4L636.0 390.2L684.2 378.7L732.4 376.4L780.5 387.1L828.7 405.9L876.9 430.6M491.5 378.7L539.7 376.4L587.9 387.1L636.0 405.9L684.2 430.6L732.4 458.5L780.5 486.7L828.7 512.9L876.9 534.5M491.5 430.6L539.7 458.5L587.9 486.7L636.0 512.9L684.2 534.5L732.4 546.4L780.5 551.3L828.7 547.7L876.9 534.5M491.5 534.5L539.7 546.4L587.9 551.3L636.0 547.7L684.2 534.5L732.4 507.2L780.5 474.5L828.7 445.7L876.9 430.6M491.5 534.5L539.7 507.2L587.9 474.5L636.0 445.7L684.2 430.6L732.4 434.1L780.5 452.0L828.7 472.4L876.9 482.6M491.5 430.6L539.7 434.1L587.9 452.0L636.0 472.4L684.2 482.6L732.4 476.1L780.5 457.4L828.7 438.4L876.9 430.6M491.5 482.6L539.7 476.1L587.9 457.4L636.0 438.4L684.2 430.6L732.4 438.1L780.5 455.7L828.7 473.3L876.9 482.6M491.5 430.6L539.7 438.1L587.9 455.7L636.0 473.3L684.2 482.6L732.4 481.0L780.5 470.3L828.7 453.1L876.9 430.6M491.5 482.6L539.7 481.0L587.9 470.3L636.0 453.1L684.2 430.6L732.4 404.7L780.5 380.8L828.7 362.0L876.9 378.7M491.5 430.6L539.7 404.7L587.9 380.8L636.0 362.0L684.2 378.7L732.4 413.2L780.5 462.9L828.7 509.5L876.9 534.5M491.5 378.7L539.7 413.2L587.9 462.9L636.0 509.5L684.2 534.5L732.4 529.8L780.5 500.8L828.7 462.6L876.9 430.6M491.5 534.5L539.7 529.8L587.9 500.8L636.0 462.6L684.2 430.6L732.4 413.7L780.5 411.6L828.7 419.1L876.9 430.6M491.5 430.6L539.7 413.7L587.9 411.6L636.0 419.1L684.2 430.6L732.4 443.0L780.5 455.9L828.7 469.3L876.9 482.6M491.5 430.6L539.7 443.0L587.9 455.9L636.0 469.3L684.2 482.6L732.4 493.6L780.5 499.1L828.7 496.1L876.9 482.6M491.5 482.6L539.7 493.6L587.9 499.1L636.0 496.1L684.2 482.6L732.4 459.2L780.5 430.1L828.7 401.3L876.9 378.7M491.5 482.6L539.7 459.2L587.9 430.1L636.0 401.3L684.2 378.7L732.4 357.2L780.5 352.5L828.7 359.4L876.9 378.7M491.5 378.7L539.7 357.2L587.9 352.5L636.0 359.4L684.2 378.7L732.4 395.4L780.5 413.8L828.7 427.8L876.9 430.6M491.5 378.7L539.7 395.4L587.9 413.8L636.0 427.8L684.2 430.6L732.4 419.4L780.5 398.9L828.7 381.1L876.9 378.7M491.5 430.6L539.7 419.4L587.9 398.9L636.0 381.1L684.2 378.7L732.4 397.3L780.5 430.6L828.7 464.0L876.9 482.6M491.5 378.7L539.7 397.3L587.9 430.6L636.0 464.0L684.2 482.6L732.4 480.6L780.5 463.3L828.7 442.9L876.9 430.6M491.5 482.6L539.7 480.6L587.9 463.3L636.0 442.9L684.2 430.6L732.4 431.2L780.5 442.8L828.7 461.0L876.9 482.6M491.5 430.6L539.7 431.2L587.9 442.8L636.0 461.0L684.2 482.6L732.4 505.2L780.5 525.6L828.7 537.0L876.9 534.5M491.5 482.6L539.7 505.2L587.9 525.6L636.0 537.0L684.2 534.5L732.4 513.7L780.5 480.9L828.7 448.7L876.9 430.6M491.5 534.5L539.7 513.7L587.9 480.9L636.0 448.7L684.2 430.6L732.4 432.8L780.5 450.4L828.7 471.2L876.9 482.6M491.5 430.6L539.7 432.8L587.9 450.4L636.0 471.2L684.2 482.6L732.4 479.0L780.5 463.7L828.7 445.0L876.9 430.6M491.5 482.6L539.7 479.0L587.9 463.7L636.0 445.0L684.2 430.6L732.4 423.9L780.5 423.5L828.7 426.6L876.9 430.6M491.5 430.6L539.7 423.9L587.9 423.5L636.0 426.6L684.2 430.6L732.4 434.4L780.5 436.6L828.7 435.8L876.9 430.6M491.5 430.6L539.7 434.4L587.9 436.6L636.0 435.8L684.2 430.6L732.4 420.7L780.5 407.2L828.7 392.4L876.9 378.7M491.5 430.6L539.7 420.7L587.9 407.2L636.0 392.4L684.2 378.7L732.4 361.6L780.5 354.9L828.7 359.2L876.9 378.7M491.5 378.7L539.7 361.6L587.9 354.9L636.0 359.2L684.2 378.7L732.4 398.9L780.5 425.4L828.7 454.6L876.9 482.6M491.5 378.7L539.7 398.9L587.9 425.4L636.0 454.6L684.2 482.6L732.4 506.5L780.5 524.2L828.7 534.0L876.9 534.5M491.5 482.6L539.7 506.5L587.9 524.2L636.0 534.0L684.2 534.5L732.4 525.9L780.5 510.8L828.7 494.4L876.9 482.6M491.5 534.5L539.7 525.9L587.9 510.8L636.0 494.4L684.2 482.6L732.4 478.5L780.5 480.9L828.7 484.4L876.9 482.6M491.5 482.6L539.7 478.5L587.9 480.9L636.0 484.4L684.2 482.6L732.4 472.5L780.5 456.4L828.7 440.4L876.9 430.6M491.5 482.6L539.7 472.5L587.9 456.4L636.0 440.4L684.2 430.6L732.4 428.7L780.5 431.6L828.7 433.7L876.9 430.6M491.5 430.6L539.7 428.7L587.9 431.6L636.0 433.7L684.2 430.6L732.4 421.6L780.5 408.4L828.7 393.7L876.9 378.7M491.5 430.6L539.7 421.6L587.9 408.4L636.0 393.7L684.2 378.7L732.4 356.6L780.5 346.0L828.7 349.0L876.9 378.7M491.5 378.7L539.7 356.6L587.9 346.0L636.0 349.0L684.2 378.7L732.4 415.4L780.5 462.1L828.7 506.0L876.9 534.5M491.5 378.7L539.7 415.4L587.9 462.1L636.0 506.0L684.2 534.5L732.4 540.4L780.5 530.5L828.7 508.0L876.9 482.6M491.5 534.5L539.7 540.4L587.9 530.5L636.0 508.0L684.2 482.6L732.4 459.5L780.5 441.7L828.7 431.3L876.9 430.6M491.5 482.6L539.7 459.5L587.9 441.7L636.0 431.3L684.2 430.6L732.4 440.2L780.5 456.7L828.7 473.1L876.9 482.6M491.5 430.6L539.7 440.2L587.9 456.7L636.0 473.1L684.2 482.6L732.4 481.3L780.5 470.1L828.7 452.2L876.9 430.6M491.5 482.6L539.7 481.3L587.9 470.1L636.0 452.2L684.2 430.6L732.4 407.4L780.5 386.4L828.7 371.0L876.9 378.7M491.5 430.6L539.7 407.4L587.9 386.4L636.0 371.0L684.2 378.7L732.4 402.4L780.5 438.5L828.7 470.8L876.9 482.6M491.5 378.7L539.7 402.4L587.9 438.5L636.0 470.8L684.2 482.6L732.4 466.6L780.5 431.0L828.7 395.1L876.9 378.7M491.5 482.6L539.7 466.6L587.9 431.0L636.0 395.1L684.2 378.7L732.4 390.1L780.5 422.4L828.7 458.7L876.9 482.6M491.5 378.7L539.7 390.1L587.9 422.4L636.0 458.7L684.2 482.6L732.4 486.4L780.5 473.3L828.7 452.0L876.9 430.6M491.5 482.6L539.7 486.4L587.9 473.3L636.0 452.0L684.2 430.6L732.4 412.8L780.5 398.4L828.7 386.8L876.9 378.7M491.5 430.6L539.7 412.8L587.9 398.4L636.0 386.8L684.2 378.7L732.4 373.4L780.5 376.0L828.7 379.8L876.9 378.7M491.5 378.7L539.7 373.4L587.9 376.0L636.0 379.8L684.2 378.7L732.4 367.5L780.5 355.3L828.7 354.5L876.9 378.7M491.5 378.7L539.7 367.5L587.9 355.3L636.0 354.5L684.2 378.7L732.4 411.6L780.5 456.1L828.7 500.6L876.9 534.5M491.5 378.7L539.7 411.6L587.9 456.1L636.0 500.6L684.2 534.5L732.4 548.9L780.5 551.5L828.7 545.6L876.9 534.5M491.5 534.5L539.7 548.9L587.9 551.5L636.0 545.6L684.2 534.5L732.4 516.7L780.5 498.4L828.7 484.9L876.9 482.6M491.5 534.5L539.7 516.7L587.9 498.4L636.0 484.9L684.2 482.6L732.4 494.1L780.5 514.5L828.7 532.1L876.9 534.5M491.5 482.6L539.7 494.1L587.9 514.5L636.0 532.1L684.2 534.5L732.4 516.5L780.5 484.0L828.7 450.7L876.9 430.6M491.5 534.5L539.7 516.5L587.9 484.0L636.0 450.7L684.2 430.6L732.4 430.1L780.5 445.3L828.7 466.1L876.9 482.6M491.5 430.6L539.7 430.1L587.9 445.3L636.0 466.1L684.2 482.6L732.4 490.1L780.5 489.8L828.7 486.0L876.9 482.6M491.5 482.6L539.7 490.1L587.9 489.8L636.0 486.0L684.2 482.6L732.4 481.5L780.5 482.4L828.7 483.4L876.9 482.6M491.5 482.6L539.7 481.5L587.9 482.4L636.0 483.4L684.2 482.6L732.4 479.0L780.5 474.6L828.7 474.0L876.9 482.6M491.5 482.6L539.7 479.0L587.9 474.6L636.0 474.0L684.2 482.6L732.4 501.9L780.5 525.8L828.7 539.9L876.9 534.5M491.5 482.6L539.7 501.9L587.9 525.8L636.0 539.9L684.2 534.5L732.4 500.7L780.5 449.3L828.7 401.5L876.9 378.7M491.5 534.5L539.7 500.7L587.9 449.3L636.0 401.5L684.2 378.7L732.4 389.9L780.5 425.8L828.7 464.1L876.9 482.6M491.5 378.7L539.7 389.9L587.9 425.8L636.0 464.1L684.2 482.6L732.4 472.2L780.5 440.3L828.7 403.9L876.9 378.7M491.5 482.6L539.7 472.2L587.9 440.3L636.0 403.9L684.2 378.7L732.4 366.6L780.5 380.9L828.7 401.7L876.9 430.6M491.5 378.7L539.7 366.6L587.9 380.9L636.0 401.7L684.2 430.6L732.4 465.3L780.5 501.0L828.7 527.8L876.9 534.5M491.5 430.6L539.7 465.3L587.9 501.0L636.0 527.8L684.2 534.5L732.4 515.9L780.5 479.5L828.7 444.3L876.9 430.6M491.5 534.5L539.7 515.9L587.9 479.5L636.0 444.3L684.2 430.6L732.4 448.0L780.5 487.0L828.7 524.0L876.9 534.5M491.5 430.6L539.7 448.0L587.9 487.0L636.0 524.0L684.2 534.5L732.4 508.4L780.5 456.5L828.7 404.7L876.9 378.7M491.5 534.5L539.7 508.4L587.9 456.5L636.0 404.7L684.2 378.7L732.4 389.1L780.5 425.9L828.7 464.9L876.9 482.6M491.5 378.7L539.7 389.1L587.9 425.9L636.0 464.9L684.2 482.6L732.4 469.2L780.5 433.7L828.7 396.7L876.9 378.7M491.5 482.6L539.7 469.2L587.9 433.7L636.0 396.7L684.2 378.7L732.4 388.4L780.5 419.6L828.7 456.3L876.9 482.6M491.5 378.7L539.7 388.4L587.9 419.6L636.0 456.3L684.2 482.6L732.4 491.4L780.5 486.9L828.7 480.5L876.9 482.6M491.5 482.6L539.7 491.4L587.9 486.9L636.0 480.5L684.2 482.6L732.4 496.5L780.5 516.6L828.7 532.4L876.9 534.5M491.5 482.6L539.7 496.5L587.9 516.6L636.0 532.4L684.2 534.5L732.4 520.2L780.5 493.3L828.7 461.2L876.9 430.6M491.5 534.5L539.7 520.2L587.9 493.3L636.0 461.2L684.2 430.6L732.4 405.4L780.5 387.4L828.7 377.3L876.9 378.7M491.5 430.6L539.7 405.4L587.9 387.4L636.0 377.3L684.2 378.7L732.4 389.8L780.5 407.5L828.7 424.0L876.9 430.6M491.5 378.7L539.7 389.8L587.9 407.5L636.0 424.0L684.2 430.6L732.4 423.4L780.5 405.9L828.7 387.7L876.9 378.7M491.5 430.6L539.7 423.4L587.9 405.9L636.0 387.7L684.2 378.7L732.4 383.4L780.5 398.8L828.7 416.9L876.9 430.6M491.5 378.7L539.7 383.4L587.9 398.8L636.0 416.9L684.2 430.6L732.4 437.0L780.5 437.3L828.7 434.6L876.9 430.6M491.5 430.6L539.7 437.0L587.9 437.3L636.0 434.6L684.2 430.6L732.4 426.2L780.5 422.5L828.7 422.8L876.9 430.6M491.5 430.6L539.7 426.2L587.9 422.5L636.0 422.8L684.2 430.6L732.4 446.7L780.5 466.5L828.7 481.4L876.9 482.6M491.5 430.6L539.7 446.7L587.9 466.5L636.0 481.4L684.2 482.6L732.4 466.3L780.5 436.7L828.7 403.8L876.9 378.7M491.5 482.6L539.7 466.3L587.9 436.7L636.0 403.8L684.2 378.7L732.4 360.5L780.5 363.3L828.7 374.6L876.9 378.7M491.5 378.7L539.7 360.5L587.9 363.3L636.0 374.6L684.2 378.7L732.4 368.0L780.5 352.8L828.7 350.3L876.9 378.7M491.5 378.7L539.7 368.0L587.9 352.8L636.0 350.3L684.2 378.7L732.4 420.6L780.5 474.9L828.7 519.9L876.9 534.5M491.5 378.7L539.7 420.6L587.9 474.9L636.0 519.9L684.2 534.5L732.4 511.0L780.5 460.9L828.7 408.8L876.9 378.7M491.5 534.5L539.7 511.0L587.9 460.9L636.0 408.8L684.2 378.7L732.4 381.4L780.5 410.4L828.7 449.3L876.9 482.6M491.5 378.7L539.7 381.4L587.9 410.4L636.0 449.3L684.2 482.6L732.4 502.6L780.5 508.8L828.7 502.2L876.9 482.6M491.5 482.6L539.7 502.6L587.9 508.8L636.0 502.2L684.2 482.6L732.4 450.3L780.5 412.2L828.7 382.9L876.9 378.7M491.5 482.6L539.7 450.3L587.9 412.2L636.0 382.9L684.2 378.7L732.4 406.5L780.5 457.0L828.7 507.5L876.9 534.5M491.5 378.7L539.7 406.5L587.9 457.0L636.0 507.5L684.2 534.5L732.4 527.3L780.5 493.8L828.7 454.8L876.9 430.6M491.5 534.5L539.7 527.3L587.9 493.8L636.0 454.8L684.2 430.6L732.4 430.1L780.5 447.6L828.7 469.3L876.9 482.6M491.5 430.6L539.7 430.1L587.9 447.6L636.0 469.3L684.2 482.6L732.4 481.9L780.5 469.4L828.7 450.7L876.9 430.6M491.5 482.6L539.7 481.9L587.9 469.4L636.0 450.7L684.2 430.6L732.4 411.7L780.5 395.4L828.7 383.5L876.9 378.7M491.5 430.6L539.7 411.7L587.9 395.4L636.0 383.5L684.2 378.7L732.4 383.0L780.5 395.7L828.7 413.2L876.9 430.6M491.5 378.7L539.7 383.0L587.9 395.7L636.0 413.2L684.2 430.6L732.4 444.6L780.5 455.6L828.7 467.0L876.9 482.6M491.5 430.6L539.7 444.6L587.9 455.6L636.0 467.0L684.2 482.6L732.4 502.8L780.5 523.2L828.7 535.8L876.9 534.5M491.5 482.6L539.7 502.8L587.9 523.2L636.0 535.8L684.2 534.5L732.4 516.5L780.5 486.9L828.7 455.0L876.9 430.6M491.5 534.5L539.7 516.5L587.9 486.9L636.0 455.0L684.2 430.6L732.4 419.0L780.5 419.4L828.7 425.7L876.9 430.6M491.5 430.6L539.7 419.0L587.9 419.4L636.0 425.7L684.2 430.6L732.4 430.2L780.5 425.9L828.7 423.7L876.9 430.6M491.5 430.6L539.7 430.2L587.9 425.9L636.0 423.7L684.2 430.6L732.4 448.3L780.5 470.8L828.7 486.0L876.9 482.6M491.5 430.6L539.7 448.3L587.9 470.8L636.0 486.0L684.2 482.6L732.4 457.5L780.5 420.1L828.7 388.0L876.9 378.7M491.5 482.6L539.7 457.5L587.9 420.1L636.0 388.0L684.2 378.7L732.4 399.4L780.5 443.4L828.7 494.3L876.9 534.5M491.5 378.7L539.7 399.4L587.9 443.4L636.0 494.3L684.2 534.5L732.4 550.5L780.5 551.1L828.7 543.4L876.9 534.5M491.5 534.5L539.7 550.5L587.9 551.1L636.0 543.4L684.2 534.5L732.4 526.1L780.5 518.1L828.7 504.8L876.9 482.6M491.5 534.5L539.7 526.1L587.9 518.1L636.0 504.8L684.2 482.6L732.4 452.6L780.5 420.9L828.7 394.6L876.9 378.7M491.5 482.6L539.7 452.6L587.9 420.9L636.0 394.6L684.2 378.7L732.4 371.9L780.5 382.3L828.7 401.0L876.9 430.6M491.5 378.7L539.7 371.9L587.9 382.3L636.0 401.0L684.2 430.6L732.4 468.6L780.5 506.9L828.7 532.9L876.9 534.5M491.5 430.6L539.7 468.6L587.9 506.9L636.0 532.9L684.2 534.5L732.4 507.7L780.5 460.8L828.7 411.7L876.9 378.7M491.5 534.5L539.7 507.7L587.9 460.8L636.0 411.7L684.2 378.7L732.4 366.1L780.5 386.0L828.7 410.3L876.9 430.6M491.5 378.7L539.7 366.1L587.9 386.0L636.0 410.3L684.2 430.6L732.4 439.9L780.5 439.1L828.7 434.1L876.9 430.6M491.5 430.6L539.7 439.9L587.9 439.1L636.0 434.1L684.2 430.6L732.4 430.8L780.5 432.8L828.7 433.5L876.9 430.6M491.5 430.6L539.7 430.8L587.9 432.8L636.0 433.5L684.2 430.6L732.4 424.8L780.5 419.7L828.7 420.2L876.9 430.6M491.5 430.6L539.7 424.8L587.9 419.7L636.0 420.2L684.2 430.6L732.4 451.9L780.5 480.9L828.7 510.8L876.9 534.5M491.5 430.6L539.7 451.9L587.9 480.9L636.0 510.8L684.2 534.5L732.4 544.6L780.5 545.8L828.7 541.0L876.9 534.5M491.5 534.5L539.7 544.6L587.9 545.8L636.0 541.0L684.2 534.5L732.4 527.0L780.5 518.9L828.7 505.6L876.9 482.6M491.5 534.5L539.7 527.0L587.9 518.9L636.0 505.6L684.2 482.6L732.4 449.8L780.5 414.0L828.7 386.6L876.9 378.7M491.5 482.6L539.7 449.8L587.9 414.0L636.0 386.6L684.2 378.7L732.4 394.3L780.5 427.0L828.7 461.7L876.9 482.6M491.5 378.7L539.7 394.3L587.9 427.0L636.0 461.7L684.2 482.6L732.4 481.4L780.5 462.5L828.7 440.4L876.9 430.6M491.5 482.6L539.7 481.4L587.9 462.5L636.0 440.4L684.2 430.6L732.4 440.2L780.5 462.9L828.7 482.3L876.9 482.6M491.5 430.6L539.7 440.2L587.9 462.9L636.0 482.3L684.2 482.6L732.4 458.4L780.5 419.8L828.7 386.8L876.9 378.7M491.5 482.6L539.7 458.4L587.9 419.8L636.0 386.8L684.2 378.7L732.4 402.8L780.5 450.2L828.7 500.9L876.9 534.5M491.5 378.7L539.7 402.8L587.9 450.2L636.0 500.9L684.2 534.5L732.4 539.7L780.5 524.7L828.7 500.0L876.9 482.6M491.5 534.5L539.7 539.7L587.9 524.7L636.0 500.0L684.2 482.6L732.4 479.9L780.5 487.6L828.7 492.8L876.9 482.6M491.5 482.6L539.7 479.9L587.9 487.6L636.0 492.8L684.2 482.6L732.4 453.0L780.5 413.4L828.7 382.7L876.9 378.7M491.5 482.6L539.7 453.0L587.9 413.4L636.0 382.7L684.2 378.7L732.4 407.5L780.5 458.3L828.7 508.2L876.9 534.5M491.5 378.7L539.7 407.5L587.9 458.3L636.0 508.2L684.2 534.5L732.4 527.5L780.5 494.8L828.7 456.1L876.9 430.6M491.5 534.5L539.7 527.5L587.9 494.8L636.0 456.1L684.2 430.6L732.4 427.4L780.5 442.3L828.7 464.2L876.9 482.6M491.5 430.6L539.7 427.4L587.9 442.3L636.0 464.2L684.2 482.6L732.4 492.8L780.5 495.2L828.7 491.6L876.9 482.6M491.5 482.6L539.7 492.8L587.9 495.2L636.0 491.6L684.2 482.6L732.4 468.4L780.5 451.3L828.7 436.7L876.9 430.6M491.5 482.6L539.7 468.4L587.9 451.3L636.0 436.7L684.2 430.6L732.4 436.5L780.5 451.9L828.7 469.9L876.9 482.6M491.5 430.6L539.7 436.5L587.9 451.9L636.0 469.9L684.2 482.6L732.4 486.2L780.5 482.9L828.7 479.4L876.9 482.6M491.5 482.6L539.7 486.2L587.9 482.9L636.0 479.4L684.2 482.6L732.4 495.2L780.5 513.5L828.7 529.5L876.9 534.5M491.5 482.6L539.7 495.2L587.9 513.5L636.0 529.5L684.2 534.5L732.4 525.4L780.5 506.6L828.7 488.7L876.9 482.6M491.5 534.5L539.7 525.4L587.9 506.6L636.0 488.7L684.2 482.6L732.4 492.7L780.5 513.6L828.7 532.0L876.9 534.5M491.5 482.6L539.7 492.7L587.9 513.6L636.0 532.0L684.2 534.5L732.4 515.8L780.5 482.3L828.7 449.0L876.9 430.6M491.5 534.5L539.7 515.8L587.9 482.3L636.0 449.0L684.2 430.6L732.4 433.2L780.5 451.0L828.7 471.5L876.9 482.6M491.5 430.6L539.7 433.2L587.9 451.0L636.0 471.5L684.2 482.6L732.4 479.5L780.5 465.3L828.7 447.1L876.9 430.6M491.5 482.6L539.7 479.5L587.9 465.3L636.0 447.1L684.2 430.6L732.4 419.0L780.5 413.5L828.7 416.4L876.9 430.6M491.5 430.6L539.7 419.0L587.9 413.5L636.0 416.4L684.2 430.6L732.4 456.6L780.5 489.5L828.7 519.0L876.9 534.5M491.5 430.6L539.7 456.6L587.9 489.5L636.0 519.0L684.2 534.5L732.4 531.3L780.5 513.8L828.7 493.7L876.9 482.6M491.5 534.5L539.7 531.3L587.9 513.8L636.0 493.7L684.2 482.6L732.4 485.9L780.5 500.8L828.7 519.3L876.9 534.5M491.5 482.6L539.7 485.9L587.9 500.8L636.0 519.3L684.2 534.5L732.4 541.5L780.5 543.7L828.7 541.6L876.9 534.5M491.5 534.5L539.7 541.5L587.9 543.7L636.0 541.6L684.2 534.5L732.4 519.0L780.5 499.9L828.7 484.8L876.9 482.6M491.5 534.5L539.7 519.0L587.9 499.9L636.0 484.8L684.2 482.6L732.4 496.7L780.5 520.4L828.7 537.6L876.9 534.5M491.5 482.6L539.7 496.7L587.9 520.4L636.0 537.6L684.2 534.5L732.4 502.7L780.5 452.1L828.7 403.6L876.9 378.7M491.5 534.5L539.7 502.7L587.9 452.1L636.0 403.6L684.2 378.7L732.4 387.1L780.5 421.0L828.7 460.0L876.9 482.6M491.5 378.7L539.7 387.1L587.9 421.0L636.0 460.0L684.2 482.6L732.4 479.2L780.5 457.0L828.7 434.8L876.9 430.6M491.5 482.6L539.7 479.2L587.9 457.0L636.0 434.8L684.2 430.6L732.4 450.9L780.5 486.8L828.7 520.1L876.9 534.5M491.5 430.6L539.7 450.9L587.9 486.8L636.0 520.1L684.2 534.5L732.4 524.2L780.5 495.3L828.7 460.3L876.9 430.6M491.5 534.5L539.7 524.2L587.9 495.3L636.0 460.3L684.2 430.6L732.4 412.3L780.5 406.7L828.7 413.0L876.9 430.6M491.5 430.6L539.7 412.3L587.9 406.7L636.0 413.0L684.2 430.6L732.4 457.5L780.5 488.9L828.7 517.1L876.9 534.5M491.5 430.6L539.7 457.5L587.9 488.9L636.0 517.1L684.2 534.5L732.4 536.6L780.5 525.9L828.7 505.9L876.9 482.6M491.5 534.5L539.7 536.6L587.9 525.9L636.0 505.9L684.2 482.6L732.4 460.5L780.5 443.0L828.7 432.5L876.9 430.6M491.5 482.6L539.7 460.5L587.9 443.0L636.0 432.5L684.2 430.6L732.4 437.3L780.5 450.3L828.7 466.5L876.9 482.6M491.5 430.6L539.7 437.3L587.9 450.3L636.0 466.5L684.2 482.6L732.4 495.8L780.5 503.0L828.7 499.9L876.9 482.6M491.5 482.6L539.7 495.8L587.9 503.0L636.0 499.9L684.2 482.6L732.4 451.4L780.5 414.2L828.7 385.2L876.9 378.7M491.5 482.6L539.7 451.4L587.9 414.2L636.0 385.2L684.2 378.7L732.4 400.8L780.5 445.2L828.7 495.6L876.9 534.5M491.5 378.7L539.7 400.8L587.9 445.2L636.0 495.6L684.2 534.5L732.4 548.7L780.5 547.6L828.7 539.7L876.9 534.5M491.5 534.5L539.7 548.7L587.9 547.6L636.0 539.7L684.2 534.5L732.4 536.3L780.5 542.2L828.7 544.1L876.9 534.5M491.5 534.5L539.7 536.3L587.9 542.2L636.0 544.1L684.2 534.5L732.4 506.1L780.5 469.3L828.7 439.4L876.9 430.6M491.5 534.5L539.7 506.1L587.9 469.3L636.0 439.4L684.2 430.6L732.4 447.9L780.5 482.8L828.7 517.6L876.9 534.5M491.5 430.6L539.7 447.9L587.9 482.8L636.0 517.6L684.2 534.5L732.4 525.3L780.5 495.1L828.7 458.7L876.9 430.6M491.5 534.5L539.7 525.3L587.9 495.1L636.0 458.7L684.2 430.6L732.4 418.2L780.5 418.9L828.7 425.3L876.9 430.6M491.5 430.6L539.7 418.2L587.9 418.9L636.0 425.3L684.2 430.6L732.4 432.8L780.5 433.2L828.7 432.8L876.9 430.6M491.5 430.6L539.7 432.8L587.9 433.2L636.0 432.8L684.2 430.6L732.4 425.1L780.5 418.3L828.7 417.3L876.9 430.6M491.5 430.6L539.7 425.1L587.9 418.3L636.0 417.3L684.2 430.6L732.4 461.4L780.5 501.1L828.7 531.6L876.9 534.5M491.5 430.6L539.7 461.4L587.9 501.1L636.0 531.6L684.2 534.5L732.4 503.4L780.5 450.1L828.7 400.2L876.9 378.7M491.5 534.5L539.7 503.4L587.9 450.1L636.0 400.2L684.2 378.7L732.4 396.2L780.5 443.2L828.7 496.9L876.9 534.5M491.5 378.7L539.7 396.2L587.9 443.2L636.0 496.9L684.2 534.5L732.4 543.0L780.5 532.1L828.7 507.5L876.9 482.6M491.5 534.5L539.7 543.0L587.9 532.1L636.0 507.5L684.2 482.6L732.4 462.9L780.5 448.7L828.7 438.2L876.9 430.6M491.5 482.6L539.7 462.9L587.9 448.7L636.0 438.2L684.2 430.6L732.4 426.6L780.5 426.1L828.7 428.0L876.9 430.6M491.5 430.6L539.7 426.6L587.9 426.1L636.0 428.0L684.2 430.6L732.4 432.8L780.5 434.0L828.7 433.6L876.9 430.6M491.5 430.6L539.7 432.8L587.9 434.0L636.0 433.6L684.2 430.6L732.4 424.7L780.5 418.6L828.7 418.4L876.9 430.6M491.5 430.6L539.7 424.7L587.9 418.6L636.0 418.4L684.2 430.6L732.4 457.3L780.5 492.3L828.7 522.5L876.9 534.5M491.5 430.6L539.7 457.3L587.9 492.3L636.0 522.5L684.2 534.5L732.4 522.3L780.5 491.6L828.7 456.2L876.9 430.6M491.5 534.5L539.7 522.3L587.9 491.6L636.0 456.2L684.2 430.6L732.4 421.3L780.5 424.5L828.7 430.4L876.9 430.6M491.5 430.6L539.7 421.3L587.9 424.5L636.0 430.4L684.2 430.6L732.4 422.5L780.5 408.9L828.7 393.7L876.9 378.7M491.5 430.6L539.7 422.5L587.9 408.9L636.0 393.7L684.2 378.7L732.4 356.0L780.5 344.5L828.7 346.5L876.9 378.7M491.5 378.7L539.7 356.0L587.9 344.5L636.0 346.5L684.2 378.7L732.4 421.2L780.5 474.3L828.7 518.4L876.9 534.5M491.5 378.7L539.7 421.2L587.9 474.3L636.0 518.4L684.2 534.5L732.4 515.2L780.5 469.3L828.7 417.0L876.9 378.7M491.5 534.5L539.7 515.2L587.9 469.3L636.0 417.0L684.2 378.7L732.4 356.7L780.5 372.9L828.7 400.3L876.9 430.6M491.5 378.7L539.7 356.7L587.9 372.9L636.0 400.3L684.2 430.6L732.4 460.7L780.5 488.6L828.7 513.6L876.9 534.5M491.5 430.6L539.7 460.7L587.9 488.6L636.0 513.6L684.2 534.5L732.4 546.1L780.5 550.7L828.7 547.0L876.9 534.5M491.5 534.5L539.7 546.1L587.9 550.7L636.0 547.0L684.2 534.5L732.4 509.4L780.5 479.0L828.7 450.3L876.9 430.6M491.5 534.5L539.7 509.4L587.9 479.0L636.0 450.3L684.2 430.6L732.4 423.9L780.5 427.3L828.7 432.6L876.9 430.6M491.5 430.6L539.7 423.9L587.9 427.3L636.0 432.6L684.2 430.6L732.4 417.6L780.5 397.8L828.7 381.6L876.9 378.7M491.5 430.6L539.7 417.6L587.9 397.8L636.0 381.6L684.2 378.7L732.4 392.6L780.5 419.8L828.7 452.2L876.9 482.6M491.5 378.7L539.7 392.6L587.9 419.8L636.0 452.2L684.2 482.6L732.4 506.9L780.5 524.0L828.7 533.7L876.9 534.5M491.5 482.6L539.7 506.9L587.9 524.0L636.0 533.7L684.2 534.5L732.4 525.9L780.5 510.0L828.7 493.1L876.9 482.6M491.5 534.5L539.7 525.9L587.9 510.0L636.0 493.1L684.2 482.6L732.4 482.3L780.5 488.9L828.7 492.3L876.9 482.6M491.5 482.6L539.7 482.3L587.9 488.9L636.0 492.3L684.2 482.6L732.4 456.7L780.5 421.8L828.7 391.6L876.9 378.7M491.5 482.6L539.7 456.7L587.9 421.8L636.0 391.6L684.2 378.7L732.4 387.6L780.5 413.8L828.7 448.2L876.9 482.6M491.5 378.7L539.7 387.6L587.9 413.8L636.0 448.2L684.2 482.6L732.4 512.1L780.5 533.5L828.7 540.9L876.9 534.5M491.5 482.6L539.7 512.1L587.9 533.5L636.0 540.9L684.2 534.5L732.4 509.3L780.5 474.5L828.7 443.8L876.9 430.6M491.5 534.5L539.7 509.3L587.9 474.5L636.0 443.8L684.2 430.6L732.4 440.4L780.5 468.3L828.7 503.1L876.9 534.5M491.5 430.6L539.7 440.4L587.9 468.3L636.0 503.1L684.2 534.5L732.4 552.1L780.5 559.8L828.7 554.8L876.9 534.5M491.5 534.5L539.7 552.1L587.9 559.8L636.0 554.8L684.2 534.5L732.4 490.6L780.5 437.9L828.7 394.5L876.9 378.7M491.5 534.5L539.7 490.6L587.9 437.9L636.0 394.5L684.2 378.7L732.4 397.9L780.5 443.6L828.7 495.8L876.9 534.5M491.5 378.7L539.7 397.9L587.9 443.6L636.0 495.8L684.2 534.5L732.4 546.0L780.5 538.8L828.7 515.2L876.9 482.6M491.5 534.5L539.7 546.0L587.9 538.8L636.0 515.2L684.2 482.6L732.4 447.1L780.5 413.2L828.7 387.7L876.9 378.7M491.5 482.6L539.7 447.1L587.9 413.2L636.0 387.7L684.2 378.7L732.4 390.9L780.5 420.7L828.7 456.0L876.9 482.6M491.5 378.7L539.7 390.9L587.9 420.7L636.0 456.0L684.2 482.6L732.4 492.0L780.5 487.2L828.7 479.9L876.9 482.6M491.5 482.6L539.7 492.0L587.9 487.2L636.0 479.9L684.2 482.6L732.4 499.7L780.5 523.8L828.7 538.8L876.9 534.5M491.5 482.6L539.7 499.7L587.9 523.8L636.0 538.8L684.2 534.5L732.4 503.9L780.5 456.9L828.7 410.0L876.9 378.7M491.5 534.5L539.7 503.9L587.9 456.9L636.0 410.0L684.2 378.7L732.4 364.4L780.5 382.0L828.7 405.2L876.9 430.6M491.5 378.7L539.7 364.4L587.9 382.0L636.0 405.2L684.2 430.6L732.4 452.8L780.5 469.6L828.7 480.1L876.9 482.6M491.5 430.6L539.7 452.8L587.9 469.6L636.0 480.1L684.2 482.6L732.4 475.8L780.5 460.9L828.7 443.4L876.9 430.6M491.5 482.6L539.7 475.8L587.9 460.9L636.0 443.4L684.2 430.6L732.4 427.4L780.5 431.8L828.7 436.0L876.9 430.6M491.5 430.6L539.7 427.4L587.9 431.8L636.0 436.0L684.2 430.6L732.4 412.5L780.5 388.6L828.7 368.7L876.9 378.7M491.5 430.6L539.7 412.5L587.9 388.6L636.0 368.7L684.2 378.7L732.4 409.6L780.5 456.8L828.7 503.6L876.9 534.5M491.5 378.7L539.7 409.6L587.9 456.8L636.0 503.6L684.2 534.5L732.4 541.3L780.5 532.0L828.7 509.4L876.9 482.6M491.5 534.5L539.7 541.3L587.9 532.0L636.0 509.4L684.2 482.6L732.4 456.3L780.5 434.7L828.7 424.0L876.9 430.6M491.5 482.6L539.7 456.3L587.9 434.7L636.0 424.0L684.2 430.6L732.4 456.3L780.5 493.2L828.7 525.0L876.9 534.5M491.5 430.6L539.7 456.3L587.9 493.2L636.0 525.0L684.2 534.5L732.4 513.8L780.5 469.1L828.7 417.9L876.9 378.7M491.5 534.5L539.7 513.8L587.9 469.1L636.0 417.9L684.2 378.7L732.4 351.5L780.5 353.7L828.7 368.3L876.9 378.7M491.5 378.7L539.7 351.5L587.9 353.7L636.0 368.3L684.2 378.7L732.4 374.8L780.5 363.7L828.7 360.7L876.9 378.7M491.5 378.7L539.7 374.8L587.9 363.7L636.0 360.7L684.2 378.7L732.4 403.6L780.5 436.5L828.7 466.2L876.9 482.6" fill="none" stroke="#00ff00" stroke-width="1"/><g fill="#00ff00"><polygon points="684.2,378.7 720.2,404.7 684.2,430.6 648.2,404.7"/><polygon points="491.5,378.7 527.5,404.7 491.5,430.6"/><polygon points="876.0,378.7 876.0,430.6 840.0,404.7"/><polygon points="684.2,430.6 720.2,456.6 684.2,482.6 648.2,456.6"/><polygon points="491.5,430.6 527.5,456.6 491.5,482.6"/><polygon points="876.0,430.6 876.0,482.6 840.0,456.6"/><polygon points="684.2,482.6 725.7,508.5 684.2,534.5 647.7,508.5"/><polygon points="491.5,482.6 535.3,508.5 491.5,534.5"/><polygon points="876.0,482.6 876.0,534.5 839.8,508.5"/></g><g fill="#000"><polygon points="684.2,378.7 711.4,404.7 684.2,430.6 656.2,404.7"/><polygon points="491.5,378.7 518.3,404.7 491.5,430.6"/><polygon points="876.0,378.7 876.0,430.6 849.7,404.7"/><polygon points="684.2,430.6 717.2,456.6 684.2,482.6 654.7,456.6"/><polygon points="491.5,430.6 525.3,456.6 491.5,482.6"/><polygon points="876.0,430.6 876.0,482.6 848.3,456.6"/><polygon points="684.2,482.6 725.7,508.5 684.2,534.5 647.7,508.5"/><polygon points="491.5,482.6 535.3,508.5 491.5,534.5"/><polygon points="876.0,482.6 876.0,534.5 839.8,508.5"/></g><clipPath id="dia"><polygon points="684.2,378.7 711.4,404.7 684.2,430.6 656.2,404.7"/><polygon points="491.5,378.7 518.3,404.7 491.5,430.6"/><polygon points="876.0,378.7 876.0,430.6 849.7,404.7"/><polygon points="684.2,430.6 717.2,456.6 684.2,482.6 654.7,456.6"/><polygon points="491.5,430.6 525.3,456.6 491.5,482.6"/><polygon points="876.0,430.6 876.0,482.6 848.3,456.6"/><polygon points="684.2,482.6 725.7,508.5 684.2,534.5 647.7,508.5"/><polygon points="491.5,482.6 535.3,508.5 491.5,534.5"/><polygon points="876.0,482.6 876.0,534.5 839.8,508.5"/></clipPath><g clip-path="url(#dia)"><rect x="684" y="334" width="1" height="245" fill="#2c2c2c"/><rect x="491" y="358" width="385" height="1" fill="#2c2c2c"/><rect x="491" y="383" width="385" height="1" fill="#2c2c2c"/><rect x="491" y="407" width="385" height="1" fill="#2c2c2c"/><rect x="491" y="432" width="385" height="1" fill="#2c2c2c"/><rect x="491" y="457" width="385" height="1" fill="#2c2c2c"/><rect x="491" y="481" width="385" height="1" fill="#2c2c2c"/><rect x="491" y="506" width="385" height="1" fill="#2c2c2c"/><rect x="491" y="530" width="385" height="1" fill="#2c2c2c"/><rect x="491" y="555" width="385" height="1" fill="#2c2c2c"/></g><path d="M684.2 378.7L711.4 404.7L684.2 430.6L656.2 404.7ZM491.5 378.7L518.3 404.7L491.5 430.6M876.0 378.7L849.7 404.7L876.0 430.6M684.2 430.6L717.2 456.6L684.2 482.6L654.7 456.6ZM491.5 430.6L525.3 456.6L491.5 482.6M876.0 430.6L848.3 456.6L876.0 482.6M684.2 482.6L725.7 508.5L684.2 534.5L647.7 508.5ZM491.5 482.6L535.3 508.5L491.5 534.5M876.0 482.6L839.8 508.5L876.0 534.5" fill="none" stroke="#00ff00" stroke-width="1"/></g></svg>
<path d="M168 85h6v1h-6zM168 96h6v1h-6zM165 88h1v6h-1zM176 88h1v6h-1zM167 86h1v1h-1zM166 87h1v1h-1zM174 86h1v1h-1zM175 87h1v1h-1zM166 94h1v1h-1zM167 95h1v1h-1zM175 94h1v1h-1zM174 95h1v1h-1zM168 137h6v1h-6zM168 148h6v1h-6zM165 140h1v6h-1zM176 140h1v6h-1zM167 138h1v1h-1zM166 139h1v1h-1zM174 138h1v1h-1zM175 139h1v1h-1zM166 146h1v1h-1zM167 147h1v1h-1zM175 146h1v1h-1zM174 147h1v1h-1zM168 189h6v1h-6zM168 200h6v1h-6zM165 192h1v6h-1zM176 192h1v6h-1zM167 190h1v1h-1zM166 191h1v1h-1zM174 190h1v1h-1zM175 191h1v1h-1zM166 198h1v1h-1zM167 199h1v1h-1zM175 198h1v1h-1zM174 199h1v1h-1zM168 241h6v1h-6zM168 252h6v1h-6zM165 244h1v6h-1zM176 244h1v6h-1zM167 242h1v1h-1zM166 243h1v1h-1zM174 242h1v1h-1zM175 243h1v1h-1zM166 250h1v1h-1zM167 251h1v1h-1zM175 250h1v1h-1zM174 251h1v1h-1zM220 85h6v1h-6zM220 96h6v1h-6zM217 88h1v6h-1zM228 88h1v6h-1zM219 86h1v1h-1zM218 87h1v1h-1zM226 86h1v1h-1zM227 87h1v1h-1zM218 94h1v1h-1zM219 95h1v1h-1zM227 94h1v1h-1zM226 95h1v1h-1zM220 137h6v1h-6zM220 148h6v1h-6zM217 140h1v6h-1zM228 140h1v6h-1zM219 138h1v1h-1zM218 139h1v1h-1zM226 138h1v1h-1zM227 139h1v1h-1zM218 146h1v1h-1zM219 147h1v1h-1zM227 146h1v1h-1zM226 147h1v1h-1zM220 189h6v1h-6zM220 200h6v1h-6zM217 192h1v6h-1zM228 192h1v6h-1zM219 190h1v1h-1zM218 191h1v1h-1zM226 190h1v1h-1zM227 191h1v1h-1zM218 198h1v1h-1zM219 199h1v1h-1zM227 198h1v1h-1zM226 199h1v1h-1zM220 241h6v1h-6zM220 252h6v1h-6zM217 244h1v6h-1zM228 244h1v6h-1zM219 242h1v1h-1zM218 243h1v1h-1zM226 242h1v1h-1zM227 243h1v1h-1zM218 250h1v1h-1zM219 251h1v1h-1zM227 250h1v1h-1zM226 251h1v1h-1zM271 85h6v1h-6zM271 96h6v1h-6zM268 88h1v6h-1zM279 88h1v6h-1zM270 86h1v1h-1zM269 87h1v1h-1zM277 86h1v1h-1zM278 87h1v1h-1zM269 94h1v1h-1zM270 95h1v1h-1zM278 94h1v1h-1zM277 95h1v1h-1zM271 137h6v1h-6zM271 148h6v1h-6zM268 140h1v6h-1zM279 140h1v6h-1zM270 138h1v1h-1zM269 139h1v1h-1zM277 138h1v1h-1zM278 139h1v1h-1zM269 146h1v1h-1zM270 147h1v1h-1zM278 146h1v1h-1zM277 147h1v1h-1zM271 189h6v1h-6zM271 200h6v1h-6zM268 192h1v6h-1zM279 192h1v6h-1zM270 190h1v1h-1zM269 191h1v1h-1zM277 190h1v1h-1zM278 191h1v1h-1zM269 198h1v1h-1zM270 199h1v1h-1zM278 198h1v1h-1zM277 199h1v1h-1zM271 241h6v1h-6zM271 252h6v1h-6zM268 244h1v6h-1zM279 244h1v6h-1zM270 242h1v1h-1zM269 243h1v1h-1zM277 242h1v1h-1zM278 243h1v1h-1zM269 250h1v1h-1zM270 251h1v1h-1zM278 250h1v1h-1zM277 251h1v1h-1zM323 85h6v1h-6zM323 96h6v1h-6zM320 88h1v6h-1zM331 88h1v6h-1zM322 86h1v1h-1zM321 87h1v1h-1zM329 86h1v1h-1zM330 87h1v1h-1zM321 94h1v1h-1zM322 95h1v1h-1zM330 94h1v1h-1zM329 95h1v1h-1zM323 137h6v1h-6zM323 148h6v1h-6zM320 140h1v6h-1zM331 140h1v6h-1zM322 138h1v1h-1zM321 139h1v1h-1zM329 138h1v1h-1zM330 139h1v1h-1zM321 146h1v1h-1zM322 147h1v1h-1zM330 146h1v1h-1zM329 147h1v1h-1zM323 189h6v1h-6zM323 200h6v1h-6zM320 192h1v6h-1zM331 192h1v6h-1zM322 190h1v1h-1zM321 191h1v1h-1zM329 190h1v1h-1zM330 191h1v1h-1zM321 198h1v1h-1zM322 199h1v1h-1zM330 198h1v1h-1zM329 199h1v1h-1zM323 241h6v1h-6zM323 252h6v1h-6zM320 244h1v6h-1zM331 244h1v6h-1zM322 242h1v1h-1zM321 243h1v1h-1zM329 242h1v1h-1zM330 243h1v1h-1zM321 250h1v1h-1zM322 251h1v1h-1zM330 250h1v1h-1zM329 251h1v1h-1z" fill="#ff0000" shape-rendering="crispEdges"/>
<path d="M170 89h3v3h-3zM171 92h1v1h-1zM170 142h3v3h-3zM173 143h1v1h-1zM169 193h3v3h-3zM172 194h1v1h-1zM169 245h3v3h-3zM170 248h1v1h-1zM221 89h3v3h-3zM222 88h1v1h-1zM222 141h3v3h-3zM221 142h1v1h-1zM221 194h3v3h-3zM220 195h1v1h-1zM221 245h3v3h-3zM220 246h1v1h-1zM272 89h3v3h-3zM275 90h1v1h-1zM272 142h3v3h-3zM273 141h1v1h-1zM272 193h3v3h-3zM275 194h1v1h-1zM272 245h3v3h-3zM271 246h1v1h-1zM324 89h3v3h-3zM325 92h1v1h-1zM324 141h3v3h-3zM323 142h1v1h-1zM324 194h3v3h-3zM323 195h1v1h-1zM324 245h3v3h-3zM327 246h1v1h-1z" fill="#ffff00" shape-rendering="crispEdges"/>
<text x="39" y="39" font-size="14" fill="#ffff00" text-anchor="start" font-weight="normal" >&gt;</text>
<text x="55" y="39" font-size="14" fill="#ffff00" text-anchor="start" font-weight="normal" >A</text>
<text x="69" y="39" font-size="14" fill="#ffff00" text-anchor="start" font-weight="normal" >:</text>
<text x="80.5" y="39" font-size="14" fill="#ffff00" text-anchor="start" font-weight="normal" >16QAM</text>
<text x="135.5" y="39" font-size="14" fill="#ffff00" text-anchor="start" font-weight="normal" letter-spacing="0.27">IQ Meas Time</text>
<text x="491" y="39" font-size="14" fill="#ff00ff" text-anchor="start" font-weight="normal" >B</text>
<text x="505" y="39" font-size="14" fill="#ff00ff" text-anchor="start" font-weight="normal" >:</text>
<text x="516.5" y="39" font-size="14" fill="#ff00ff" text-anchor="start" font-weight="normal" >16QAM</text>
<text x="572" y="39" font-size="14" fill="#ff00ff" text-anchor="start" font-weight="normal" >Spectrum</text>
<text x="55" y="328" font-size="14" fill="#00ffff" text-anchor="start" font-weight="normal" >C</text>
<text x="69" y="328" font-size="14" fill="#00ffff" text-anchor="start" font-weight="normal" >:</text>
<text x="80.5" y="328" font-size="14" fill="#00ffff" text-anchor="start" font-weight="normal" >16QAM</text>
<text x="136" y="328" font-size="14" fill="#00ffff" text-anchor="start" font-weight="normal" >Sym/Err</text>
<text x="491" y="328" font-size="14" fill="#00ff00" text-anchor="start" font-weight="normal" >D</text>
<text x="505" y="328" font-size="14" fill="#00ff00" text-anchor="start" font-weight="normal" >:</text>
<text x="516.5" y="328" font-size="14" fill="#00ff00" text-anchor="start" font-weight="normal" >16QAM</text>
<text x="572.5" y="328" font-size="14" fill="#00ff00" text-anchor="start" font-weight="normal" letter-spacing="0.27">IQ Meas Time</text>
<text transform="translate(54.5,55) scale(1.1,1)" font-size="9.6" fill="#f0f0f0" stroke="#f0f0f0" stroke-width="0.3" text-anchor="end">1.50</text>
<text transform="translate(54.5,120) scale(1.1,1)" font-size="9.6" fill="#f0f0f0" stroke="#f0f0f0" stroke-width="0.3" text-anchor="end">Const</text>
<text transform="translate(54.5,206.7) scale(1.1,1)" font-size="9.6" fill="#f0f0f0" stroke="#f0f0f0" stroke-width="0.3" text-anchor="end">300m</text>
<text transform="translate(54.5,219) scale(1.1,1)" font-size="9.6" fill="#f0f0f0" stroke="#f0f0f0" stroke-width="0.3" text-anchor="end">/div</text>
<text transform="translate(54.5,289) scale(1.1,1)" font-size="9.6" fill="#f0f0f0" stroke="#f0f0f0" stroke-width="0.3" text-anchor="end">-1.50</text>
<text x="55" y="306" font-size="12" fill="#f0f0f0" text-anchor="start" font-weight="normal" letter-spacing="0.2">-2.34413</text>
<text x="440.7" y="306" font-size="12" fill="#f0f0f0" text-anchor="end" font-weight="normal" letter-spacing="0.2">2.34413</text>
<text transform="translate(490.5,54.6) scale(1.1,1)" font-size="9.6" fill="#f0f0f0" stroke="#f0f0f0" stroke-width="0.3" text-anchor="end">0.00</text>
<text transform="translate(490.5,69.7) scale(1.1,1)" font-size="9.6" fill="#f0f0f0" stroke="#f0f0f0" stroke-width="0.3" text-anchor="end">dBm</text>
<text transform="translate(490.5,119.8) scale(1.1,1)" font-size="9.6" fill="#f0f0f0" stroke="#f0f0f0" stroke-width="0.3" text-anchor="end">LogMag</text>
<text transform="translate(490.5,207) scale(1.1,1)" font-size="9.6" fill="#f0f0f0" stroke="#f0f0f0" stroke-width="0.3" text-anchor="end">10.0</text>
<text transform="translate(490.5,218.5) scale(1.1,1)" font-size="9.6" fill="#f0f0f0" stroke="#f0f0f0" stroke-width="0.3" text-anchor="end">/div</text>
<text transform="translate(490.5,288.8) scale(1.1,1)" font-size="9.6" fill="#f0f0f0" stroke="#f0f0f0" stroke-width="0.3" text-anchor="end">-100</text>
<text x="491.5" y="305.6" font-size="12" fill="#f0f0f0" text-anchor="start" font-weight="normal" letter-spacing="0.13">Center:100.000000 MHz</text>
<text x="877.1" y="305.6" font-size="12" fill="#f0f0f0" text-anchor="end" font-weight="normal" letter-spacing="0.13">Span:312.500 kHz</text>
<text transform="translate(490.5,343.8) scale(1.1,1)" font-size="9.6" fill="#f0f0f0" stroke="#f0f0f0" stroke-width="0.3" text-anchor="end">1.50</text>
<text transform="translate(490.5,409) scale(1.1,1)" font-size="9.6" fill="#f0f0f0" stroke="#f0f0f0" stroke-width="0.3" text-anchor="end">I-Eye</text>
<text transform="translate(490.5,496) scale(1.1,1)" font-size="9.6" fill="#f0f0f0" stroke="#f0f0f0" stroke-width="0.3" text-anchor="end">300m</text>
<text transform="translate(490.5,508) scale(1.1,1)" font-size="9.6" fill="#f0f0f0" stroke="#f0f0f0" stroke-width="0.3" text-anchor="end">/div</text>
<text transform="translate(490.5,577) scale(1.1,1)" font-size="9.6" fill="#f0f0f0" stroke="#f0f0f0" stroke-width="0.3" text-anchor="end">-1.50</text>
<text x="491.5" y="593.7" font-size="12" fill="#f0f0f0" text-anchor="start" font-weight="normal" letter-spacing="0.13">Start: -1 sym</text>
<text x="877.1" y="593.7" font-size="12" fill="#f0f0f0" text-anchor="end" font-weight="normal" letter-spacing="0.13">Stop: 1 sym</text>
<text x="16" y="352" font-size="13" fill="#00ffff" text-anchor="start" font-weight="normal" >EVM</text>
<text x="93" y="352" font-size="13" fill="#00ffff" text-anchor="start" font-weight="normal" >217.79m</text>
<text x="171" y="352" font-size="13" fill="#00ffff" text-anchor="start" font-weight="normal" >%rms</text>
<text x="209" y="352" font-size="13" fill="#00ffff" text-anchor="start" font-weight="normal" >3.5520</text>
<text x="286" y="352" font-size="13" fill="#00ffff" text-anchor="start" font-weight="normal" >% pk at sym</text>
<text x="401" y="352" font-size="13" fill="#00ffff" text-anchor="start" font-weight="normal" >920</text>
<text x="16" y="370" font-size="13" fill="#00ffff" text-anchor="start" font-weight="normal" >Mag Err</text>
<text x="93" y="370" font-size="13" fill="#00ffff" text-anchor="start" font-weight="normal" >182.06m</text>
<text x="171" y="370" font-size="13" fill="#00ffff" text-anchor="start" font-weight="normal" >%rms</text>
<text x="209" y="370" font-size="13" fill="#00ffff" text-anchor="start" font-weight="normal" >3.5519</text>
<text x="286" y="370" font-size="13" fill="#00ffff" text-anchor="start" font-weight="normal" >% pk at sym</text>
<text x="401" y="370" font-size="13" fill="#00ffff" text-anchor="start" font-weight="normal" >920</text>
<text x="16" y="388" font-size="13" fill="#00ffff" text-anchor="start" font-weight="normal" >Phase Err</text>
<text x="93" y="388" font-size="13" fill="#00ffff" text-anchor="start" font-weight="normal" >107.51m</text>
<text x="171" y="388" font-size="13" fill="#00ffff" text-anchor="start" font-weight="normal" >deg</text>
<text x="209" y="388" font-size="13" fill="#00ffff" text-anchor="start" font-weight="normal" >923.66m</text>
<text x="286" y="388" font-size="13" fill="#00ffff" text-anchor="start" font-weight="normal" >deg pk at sym</text>
<text x="401" y="388" font-size="13" fill="#00ffff" text-anchor="start" font-weight="normal" >211</text>
<text x="16" y="406" font-size="13" fill="#00ffff" text-anchor="start" font-weight="normal" >Freq Err</text>
<text x="93" y="406" font-size="13" fill="#00ffff" text-anchor="start" font-weight="normal" >-11.021m</text>
<text x="171" y="406" font-size="13" fill="#00ffff" text-anchor="start" font-weight="normal" >Hz</text>
<text x="16" y="424" font-size="13" fill="#00ffff" text-anchor="start" font-weight="normal" >IQ Offset</text>
<text x="93" y="424" font-size="13" fill="#00ffff" text-anchor="start" font-weight="normal" >-64.778</text>
<text x="171" y="424" font-size="13" fill="#00ffff" text-anchor="start" font-weight="normal" >dB</text>
<text x="209" y="424" font-size="13" fill="#00ffff" text-anchor="start" font-weight="normal" >SNR(MER)</text>
<text x="286" y="424" font-size="13" fill="#00ffff" text-anchor="start" font-weight="normal" >44.666</text>
<text x="401" y="424" font-size="13" fill="#00ffff" text-anchor="start" font-weight="normal" >dB</text>
<text x="16" y="442" font-size="13" fill="#00ffff" text-anchor="start" font-weight="normal" >Quad Err</text>
<text x="93" y="442" font-size="13" fill="#00ffff" text-anchor="start" font-weight="normal" >381.69m</text>
<text x="171" y="442" font-size="13" fill="#00ffff" text-anchor="start" font-weight="normal" >deg</text>
<text x="209" y="442" font-size="13" fill="#00ffff" text-anchor="start" font-weight="normal" >Gain Imb</text>
<text x="286" y="442" font-size="13" fill="#00ffff" text-anchor="start" font-weight="normal" >3.5359m</text>
<text x="401" y="442" font-size="13" fill="#00ffff" text-anchor="start" font-weight="normal" >dB</text>
<rect x="16" y="448" width="420" height="1.5" fill="#00ffff"/>
<text x="46" y="463" font-size="13" fill="#00ffff" text-anchor="end" font-weight="normal" >0</text>
<text x="60.20 70.20 80.20 90.20 100.20 110.20 120.20 130.20 150.20 160.20 170.20 180.20 190.20 200.20 210.20 220.20 240.20 250.20 260.20 270.20 280.20 290.20 300.20 310.20 330.20 340.20 350.20 360.20 370.20 380.20 390.20 400.20" y="463" font-size="13" fill="#00ffff" text-anchor="middle">3EF92C64221AE3D4DF2FD0FC83CE0600</text>
<text x="46" y="478" font-size="13" fill="#00ffff" text-anchor="end" font-weight="normal" >32</text>
<text x="60.20 70.20 80.20 90.20 100.20 110.20 120.20 130.20 150.20 160.20 170.20 180.20 190.20 200.20 210.20 220.20 240.20 250.20 260.20 270.20 280.20 290.20 300.20 310.20 330.20 340.20 350.20 360.20 370.20 380.20 390.20 400.20" y="478" font-size="13" fill="#00ffff" text-anchor="middle">1B6FD2E5CFAB92E7D6E7F773312A7F56</text>
<text x="46" y="493" font-size="13" fill="#00ffff" text-anchor="end" font-weight="normal" >64</text>
<text x="60.20 70.20 80.20 90.20 100.20 110.20 120.20 130.20 150.20 160.20 170.20 180.20 190.20 200.20 210.20 220.20 240.20 250.20 260.20 270.20 280.20 290.20 300.20 310.20 330.20 340.20 350.20 360.20 370.20 380.20 390.20 400.20" y="493" font-size="13" fill="#00ffff" text-anchor="middle">A7D4FEBB16A5CDB2DE8242003AFB14BC</text>
<text x="46" y="508" font-size="13" fill="#00ffff" text-anchor="end" font-weight="normal" >96</text>
<text x="60.20 70.20 80.20 90.20 100.20 110.20 120.20 130.20 150.20 160.20 170.20 180.20 190.20 200.20 210.20 220.20 240.20 250.20 260.20 270.20 280.20 290.20 300.20 310.20 330.20 340.20 350.20 360.20 370.20 380.20 390.20 400.20" y="508" font-size="13" fill="#00ffff" text-anchor="middle">81D74A658F881F6DEA3D6C663B568640</text>
<text x="46" y="523" font-size="13" fill="#00ffff" text-anchor="end" font-weight="normal" >128</text>
<text x="60.20 70.20 80.20 90.20 100.20 110.20 120.20 130.20 150.20 160.20 170.20 180.20 190.20 200.20 210.20 220.20 240.20 250.20 260.20 270.20 280.20 290.20 300.20 310.20 330.20 340.20 350.20 360.20 370.20 380.20 390.20 400.20" y="523" font-size="13" fill="#00ffff" text-anchor="middle">38E258D9153087EDAA1EE1EC078C1D55</text>
<text x="46" y="538" font-size="13" fill="#00ffff" text-anchor="end" font-weight="normal" >160</text>
<text x="60.20 70.20 80.20 90.20 100.20 110.20 120.20 130.20 150.20 160.20 170.20 180.20 190.20 200.20 210.20 220.20 240.20 250.20 260.20 270.20 280.20 290.20 300.20 310.20 330.20 340.20 350.20 360.20 370.20 380.20 390.20 400.20" y="538" font-size="13" fill="#00ffff" text-anchor="middle">329EA1CF8A06218FA98BABB37310BEB9</text>
<text x="46" y="553" font-size="13" fill="#00ffff" text-anchor="end" font-weight="normal" >192</text>
<text x="60.20 70.20 80.20 90.20 100.20 110.20 120.20 130.20 150.20 160.20 170.20 180.20 190.20 200.20 210.20 220.20 240.20 250.20 260.20 270.20 280.20 290.20 300.20 310.20 330.20 340.20 350.20 360.20 370.20 380.20 390.20 400.20" y="553" font-size="13" fill="#00ffff" text-anchor="middle">0FE9A826394FCA25AC05955130A6796C</text>
<text x="46" y="568" font-size="13" fill="#00ffff" text-anchor="end" font-weight="normal" >224</text>
<text x="60.20 70.20 80.20 90.20 100.20 110.20 120.20 130.20 150.20 160.20 170.20 180.20 190.20 200.20 210.20 220.20 240.20 250.20 260.20 270.20 280.20 290.20 300.20 310.20 330.20 340.20 350.20 360.20 370.20 380.20 390.20 400.20" y="568" font-size="13" fill="#00ffff" text-anchor="middle">47AF90DF0E443ADA807AD89936BD0DD1</text>
<text x="46" y="583" font-size="13" fill="#00ffff" text-anchor="end" font-weight="normal" >256</text>
<text x="60.20 70.20 80.20 90.20 100.20 110.20 120.20 130.20 150.20 160.20 170.20 180.20 190.20 200.20 210.20 220.20 240.20 250.20 260.20 270.20 280.20 290.20 300.20 310.20 330.20 340.20 350.20 360.20 370.20 380.20 390.20 400.20" y="583" font-size="13" fill="#00ffff" text-anchor="middle">7085F4E67B750BCA0438C3CCCC1F4C7E</text>
<rect x="427" y="451" width="8" height="140" fill="#1a1a1a"/>
<rect x="425" y="451" width="12" height="30" fill="#2e2e2e"/>
</svg>
</body></html>
